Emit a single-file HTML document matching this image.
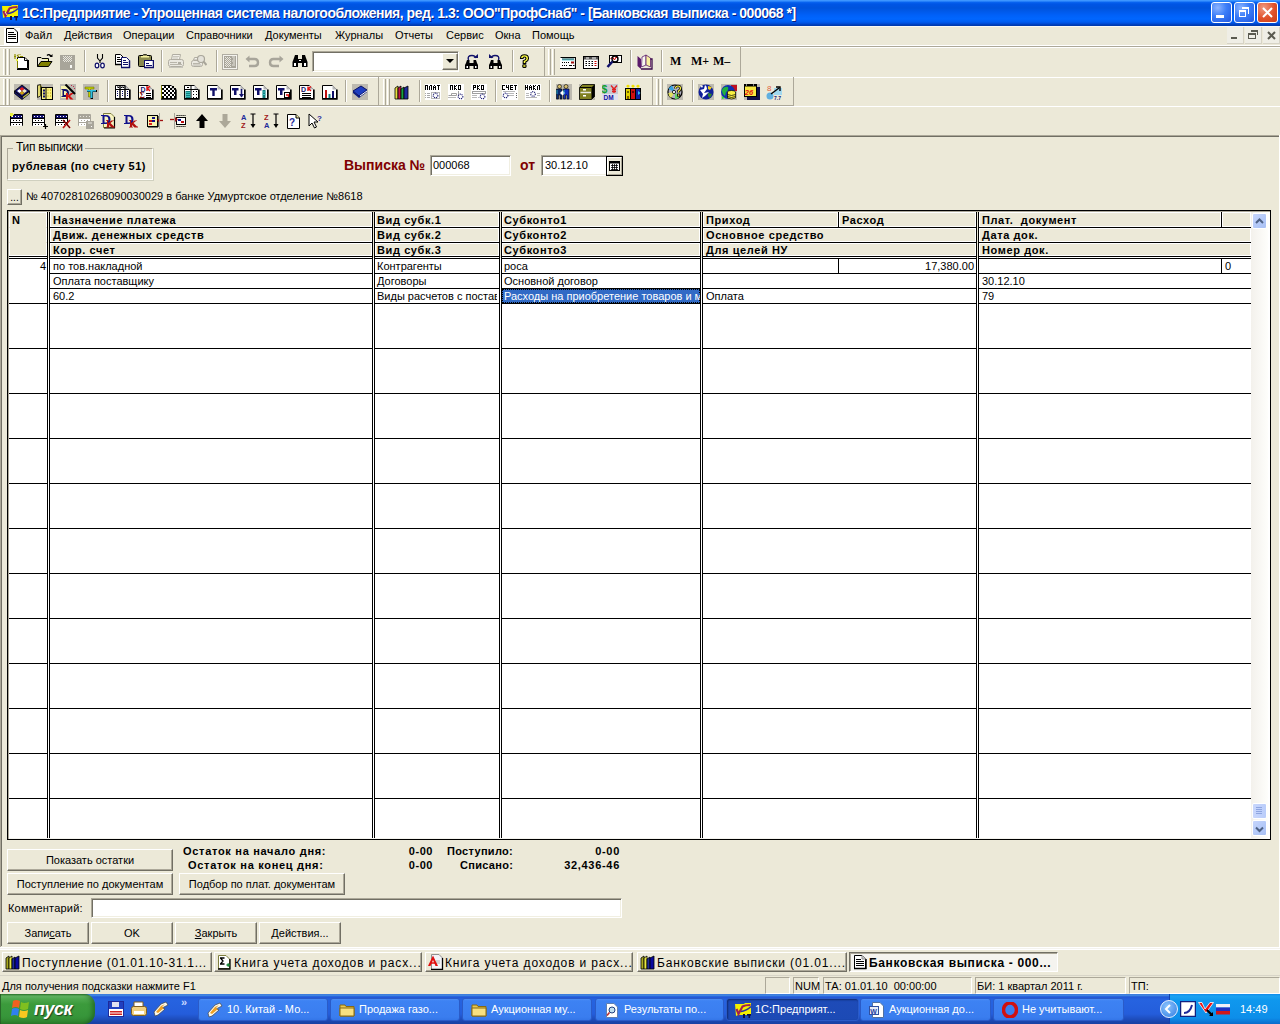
<!DOCTYPE html><html><head><meta charset="utf-8"><style>
*{box-sizing:border-box}
html,body{margin:0;padding:0;width:1280px;height:1024px;overflow:hidden;background:#ECE9D8;font-family:"Liberation Sans",sans-serif;font-size:11px;color:#000}
div{position:absolute}
.t{white-space:nowrap;line-height:13px}
.b{font-weight:bold;letter-spacing:0.55px}
.btn{background:#ECE9D8;border-top:1px solid #fff;border-left:1px solid #fff;border-right:1px solid #716F64;border-bottom:1px solid #716F64;box-shadow:inset -1px -1px 0 #ACA899;text-align:center;line-height:19px}
.sunk{background:#fff;border-top:1px solid #ACA899;border-left:1px solid #ACA899;border-right:1px solid #fff;border-bottom:1px solid #fff;box-shadow:inset 1px 1px 0 #716F64, inset -1px -1px 0 #F1EFE2}
svg{position:absolute}
</style></head><body>
<div style="left:0px;top:0px;width:1280px;height:26px;background:linear-gradient(#3D95FF 0px,#3D95FF 1px,#0A66F2 2px,#0055E5 4px,#0053DC 8px,#0060F8 15px,#0066FF 19px,#005CF0 22px,#0048D0 24px,#003BB0 25px)"></div>
<svg style="left:2px;top:4px" width="18" height="18" viewBox="0 0 18 18">
<path d="M0 2 H9 L10 1 H16 V12 L12 13 H3 L1 14 Z" fill="#F4F000"/>
<path d="M1.5 7 L3.5 12 L7.5 4.5 Q10 3 15.5 3" stroke="#A02050" stroke-width="2.2" fill="none"/>
<path d="M6 9.5 Q11 9 16 4.5" stroke="#30309A" stroke-width="1.6" fill="none"/>
<path d="M3 8 L5 11 M8 6 H11" stroke="#fff" stroke-width="0.8"/>
<rect x="8" y="12" width="2" height="4" fill="#101040"/><rect x="12" y="12" width="4" height="1.6" fill="#101040"/><rect x="13.5" y="12" width="1.6" height="4.5" fill="#101040"/>
</svg>
<div class="t" style="left:22px;top:5px;font-size:14px;font-weight:bold;color:#fff;text-shadow:1px 1px 0 #0A1E80;line-height:17px;letter-spacing:-0.48px">1C:Предприятие - Упрощенная система налогообложения, ред. 1.3: ООО"ПрофСнаб" - [Банковская выписка - 000068 *]</div>
<div style="left:1211px;top:2px;width:21px;height:21px;border:1px solid #fff;border-radius:3px;background:radial-gradient(circle at 30% 25%,#8CB4FF,#3C7EF8 45%,#2158E0)"></div>
<div style="left:1234px;top:2px;width:21px;height:21px;border:1px solid #fff;border-radius:3px;background:radial-gradient(circle at 30% 25%,#8CB4FF,#3C7EF8 45%,#2158E0)"></div>
<div style="left:1257px;top:2px;width:21px;height:21px;border:1px solid #fff;border-radius:3px;background:radial-gradient(circle at 30% 25%,#F09A80,#E0512A 55%,#C8401A)"></div>
<div style="left:1216px;top:15px;width:8px;height:3px;background:#fff"></div>
<div style="left:1239px;top:10px;width:7px;height:7px;border:1px solid #fff;border-top-width:2px"></div>
<div style="left:1242px;top:7px;width:7px;height:7px;border-top:2px solid #fff;border-right:1px solid #fff"></div>
<svg style="left:1261px;top:6px" width="13" height="13"><path d="M2 2 L11 11 M11 2 L2 11" stroke="#fff" stroke-width="2"/></svg>
<div style="left:0px;top:26px;width:1280px;height:1px;background:#F8F8F4"></div>
<div style="left:4px;top:28px;width:16px;height:17px;background:#fff"></div>
<svg style="left:6px;top:28px" width="12" height="15" viewBox="0 0 12 15"><path d="M0.5 0.5 H8 L11.5 4 V14.5 H0.5 Z" fill="#fff" stroke="#000"/><path d="M2 4.5 H8 M2 6.5 H10 M2 8.5 H10 M2 10.5 H10" stroke="#000" stroke-width="1"/></svg>
<div class="t" style="left:25px;top:29px;">Файл</div>
<div class="t" style="left:64px;top:29px;">Действия</div>
<div class="t" style="left:123px;top:29px;">Операции</div>
<div class="t" style="left:186px;top:29px;">Справочники</div>
<div class="t" style="left:265px;top:29px;">Документы</div>
<div class="t" style="left:335px;top:29px;">Журналы</div>
<div class="t" style="left:395px;top:29px;">Отчеты</div>
<div class="t" style="left:446px;top:29px;">Сервис</div>
<div class="t" style="left:495px;top:29px;">Окна</div>
<div class="t" style="left:532px;top:29px;">Помощь</div>
<div style="left:1227px;top:27px;width:17px;height:17px;background:#EFEEE6;border-right:1px solid #D6D3C6;border-bottom:1px solid #D6D3C6"></div>
<div style="left:1245px;top:27px;width:17px;height:17px;background:#EFEEE6;border-right:1px solid #D6D3C6;border-bottom:1px solid #D6D3C6"></div>
<div style="left:1263px;top:27px;width:17px;height:17px;background:#EFEEE6;border-right:1px solid #D6D3C6;border-bottom:1px solid #D6D3C6"></div>
<div style="left:1231px;top:37px;width:6px;height:2px;background:#5A5A50"></div>
<div style="left:1248px;top:33px;width:8px;height:6px;border:1px solid #5A5A50;border-top-width:2px"></div>
<div style="left:1251px;top:30px;width:7px;height:5px;border-top:2px solid #5A5A50;border-right:1px solid #5A5A50"></div>
<svg style="left:1266px;top:30px" width="11" height="11"><path d="M2 2 L9 9 M9 2 L2 9" stroke="#5A5A50" stroke-width="2"/></svg>
<div style="left:0px;top:45px;width:1280px;height:1px;background:#fff"></div>
<div style="left:0px;top:46px;width:1280px;height:1px;background:#ACA899"></div>
<div style="left:0px;top:47px;width:1280px;height:1px;background:#fff"></div>
<div style="left:3px;top:49px;width:1px;height:26px;background:#fff"></div>
<div style="left:5px;top:49px;width:1px;height:26px;background:#ACA899"></div>
<div style="left:7px;top:49px;width:1px;height:26px;background:#fff"></div>
<div style="left:9px;top:49px;width:1px;height:26px;background:#ACA899"></div>
<svg style="left:14px;top:54px" width="16" height="16" viewBox="0 0 16 16"><path d="M3.5 3.5 H11 L13.5 6 V14.5 H3.5 Z" fill="#fff" stroke="#000"/><path d="M3 15.5 H15 M14.5 6 V15" stroke="#000"/><path d="M3.5 6 V14" stroke="#808000"/><path d="M10.5 3.5 V6.5 H13.5" fill="none" stroke="#000"/><path d="M0 2.5 H2 M1 0 V5 M3 1 L5 3 M4 0 H7 M6 2.5 H9" stroke="#909000" stroke-width="1.2"/><rect x="2" y="5" width="2" height="2" fill="#E8F040"/></svg>
<svg style="left:37px;top:54px" width="16" height="16" viewBox="0 0 16 16"><path d="M0.5 3.5 H4 L5 4.5 H11.5 V7" fill="#F4F4A0" stroke="#000"/><path d="M0.5 3.5 V12.5" stroke="#000"/><path d="M0.5 12.5 L4 7.5 H15 L11.5 12.5 Z" fill="#808000" stroke="#000"/><path d="M10 1.5 Q12 -0.5 14.5 2.5" stroke="#000" stroke-width="1.3" fill="none"/><path d="M12.5 3 H15.5 V0 Z" fill="#000"/></svg>
<svg style="left:60px;top:54px" width="16" height="16" viewBox="0 0 16 16"><rect x="0" y="1" width="15" height="15" fill="#A8A59A"/><g fill="#E8E6DE"><rect x="3" y="2" width="1" height="1"/><rect x="3" y="4" width="1" height="1"/><rect x="3" y="6" width="1" height="1"/><rect x="4" y="3" width="1" height="1"/><rect x="4" y="5" width="1" height="1"/><rect x="4" y="7" width="1" height="1"/><rect x="5" y="2" width="1" height="1"/><rect x="5" y="4" width="1" height="1"/><rect x="5" y="6" width="1" height="1"/><rect x="6" y="3" width="1" height="1"/><rect x="6" y="5" width="1" height="1"/><rect x="6" y="7" width="1" height="1"/><rect x="7" y="2" width="1" height="1"/><rect x="7" y="4" width="1" height="1"/><rect x="7" y="6" width="1" height="1"/><rect x="8" y="3" width="1" height="1"/><rect x="8" y="5" width="1" height="1"/><rect x="8" y="7" width="1" height="1"/><rect x="9" y="2" width="1" height="1"/><rect x="9" y="4" width="1" height="1"/><rect x="9" y="6" width="1" height="1"/><rect x="10" y="3" width="1" height="1"/><rect x="10" y="5" width="1" height="1"/><rect x="10" y="7" width="1" height="1"/><rect x="11" y="2" width="1" height="1"/><rect x="11" y="4" width="1" height="1"/><rect x="11" y="6" width="1" height="1"/></g><rect x="10" y="11" width="2" height="3" fill="#F8F8F4"/></svg>
<svg style="left:92px;top:54px" width="16" height="16" viewBox="0 0 16 16"><path d="M5.5 0 V4 L8 7 M10.5 0 V4 L8 7 V9" stroke="#000" stroke-width="1.1" fill="none"/><ellipse cx="5" cy="11.5" rx="1.8" ry="2.4" fill="#fff" stroke="#10106A" stroke-width="1.2"/><ellipse cx="10.5" cy="11.5" rx="1.8" ry="2.4" fill="#fff" stroke="#10106A" stroke-width="1.2"/></svg>
<svg style="left:115px;top:54px" width="16" height="16" viewBox="0 0 16 16"><path d="M0.5 0.5 H5.5 L8.5 3.5 V10.5 H0.5 Z" fill="#fff" stroke="#000"/><path d="M0 10.5 H9" stroke="#000" stroke-width="1.5"/><path d="M2 3.5 H5 M2 5.5 H7 M2 7.5 H7" stroke="#000"/><path d="M6.5 3.5 H11.5 L14.5 6.5 V13.5 H6.5 Z" fill="#fff" stroke="#10106A"/><path d="M6 13.5 H15 M14.5 6.5 V14" stroke="#10106A" stroke-width="1.5"/><path d="M8 6.5 H11 M8 8.5 H13 M8 10.5 H13" stroke="#10106A"/></svg>
<svg style="left:138px;top:54px" width="16" height="16" viewBox="0 0 16 16"><rect x="0.5" y="1.5" width="13" height="11" rx="1" fill="#8A8A50" stroke="#000"/><path d="M4 2 H10 L8.5 0.5 H5.5 Z" fill="#F8F4A0" stroke="#000" stroke-width="0.8"/><rect x="3" y="2" width="8" height="1.5" fill="#F8F4A0"/><rect x="6.5" y="6.5" width="9" height="7" fill="#fff" stroke="#10106A"/><path d="M6 13.5 H16 M15.5 6 V14" stroke="#10106A" stroke-width="1.5"/><path d="M8 9.5 H11 M8 11.5 H14" stroke="#10106A"/></svg>
<svg style="left:168px;top:54px" width="16" height="16" viewBox="0 0 16 16"><path d="M4.5 0.5 H12.5 L11.5 5.5 H3.5 Z" fill="#F2F0EA" stroke="#B0ADA2"/><path d="M5 2.5 H11 M5 4 H10" stroke="#C8C6BC"/><rect x="0.5" y="5.5" width="15" height="7" rx="2" fill="#EAE8E0" stroke="#B0ADA2"/><path d="M2 8.5 H9 M2 10.5 H14" stroke="#B8B5AA"/><rect x="10" y="8" width="3" height="2" fill="#B0ADA2"/><path d="M1 13.5 H15" stroke="#C8C6BC"/></svg>
<svg style="left:191px;top:54px" width="16" height="16" viewBox="0 0 16 16"><path d="M3.5 3.5 H9 L8 6 H2.5 Z" fill="#F2F0EA" stroke="#B0ADA2"/><rect x="0.5" y="6.5" width="11" height="6" rx="2" fill="#EAE8E0" stroke="#B0ADA2"/><path d="M2 9.5 H9 M2 11 H10" stroke="#B8B5AA"/><circle cx="10" cy="5" r="3.5" fill="#E4E2DA" stroke="#A8A59A" stroke-width="1.2"/><path d="M12.5 7.5 L15.5 11" stroke="#A8A59A" stroke-width="2"/></svg>
<svg style="left:222px;top:54px" width="16" height="16" viewBox="0 0 16 16"><rect x="0.5" y="0.5" width="15" height="15" fill="#F4F3EE" stroke="#B0ADA2"/><rect x="2" y="2" width="12" height="12" fill="#A8A59A"/><g fill="#E8E6DE"><rect x="3" y="3" width="1" height="1"/><rect x="3" y="5" width="1" height="1"/><rect x="3" y="7" width="1" height="1"/><rect x="3" y="9" width="1" height="1"/><rect x="3" y="11" width="1" height="1"/><rect x="4" y="4" width="1" height="1"/><rect x="4" y="6" width="1" height="1"/><rect x="4" y="8" width="1" height="1"/><rect x="4" y="10" width="1" height="1"/><rect x="4" y="12" width="1" height="1"/><rect x="5" y="3" width="1" height="1"/><rect x="5" y="5" width="1" height="1"/><rect x="5" y="7" width="1" height="1"/><rect x="5" y="9" width="1" height="1"/><rect x="5" y="11" width="1" height="1"/><rect x="6" y="4" width="1" height="1"/><rect x="6" y="6" width="1" height="1"/><rect x="6" y="8" width="1" height="1"/><rect x="6" y="10" width="1" height="1"/><rect x="6" y="12" width="1" height="1"/><rect x="7" y="3" width="1" height="1"/><rect x="7" y="5" width="1" height="1"/><rect x="7" y="7" width="1" height="1"/><rect x="7" y="9" width="1" height="1"/><rect x="7" y="11" width="1" height="1"/><rect x="8" y="4" width="1" height="1"/><rect x="8" y="6" width="1" height="1"/><rect x="8" y="8" width="1" height="1"/><rect x="8" y="10" width="1" height="1"/><rect x="8" y="12" width="1" height="1"/></g><path d="M10 3 H13 M11 5 H13 M10 7 H13 M11 9 H13 M10 11 H13" stroke="#E8E6DE"/></svg>
<svg style="left:245px;top:54px" width="16" height="16" viewBox="0 0 16 16"><path d="M3 5 H9.5 Q13 5 13 8.5 Q13 12 9.5 12 H4" stroke="#A8A59A" stroke-width="2.4" fill="none"/><path d="M0.5 5 L4.5 1.5 V8.5 Z" fill="#A8A59A"/></svg>
<svg style="left:268px;top:54px" width="16" height="16" viewBox="0 0 16 16"><path d="M12 5 H5.5 Q2 5 2 8.5 Q2 12 5.5 12 H11" stroke="#A8A59A" stroke-width="2.4" fill="none"/><path d="M15.5 5 L11.5 1.5 V8.5 Z" fill="#A8A59A"/></svg>
<svg style="left:292px;top:54px" width="16" height="16" viewBox="0 0 16 16"><path d="M2 4 L3 1 H6 V5 H10 V1 H13 L14 4 L15.5 8 V13 H10 V9 H6 V13 H0.5 V8 Z" fill="#000"/><rect x="2" y="9" width="2" height="3" fill="#fff"/><rect x="12" y="9" width="2" height="3" fill="#fff"/><rect x="7" y="6" width="2" height="1" fill="#fff"/></svg>
<svg style="left:464px;top:54px" width="16" height="16" viewBox="0 0 16 16"><path d="M2 9 L3 6 H5.5 V9 H9.5 V6 H12 L13 9 L14 11 V15 H9.5 V12 H5.5 V15 H1 V11 Z" fill="#000"/><rect x="2.5" y="12" width="1.5" height="2" fill="#fff"/><rect x="11" y="12" width="1.5" height="2" fill="#fff"/><path d="M4.5 6 Q3 1.5 8 1.5 Q11 1.5 12 4" stroke="#10106A" stroke-width="1.4" fill="none"/><path d="M9.5 4 H14 V0 Z" fill="#10106A"/></svg>
<svg style="left:488px;top:54px" width="16" height="16" viewBox="0 0 16 16"><path d="M2 9 L3 6 H5.5 V9 H9.5 V6 H12 L13 9 L14 11 V15 H9.5 V12 H5.5 V15 H1 V11 Z" fill="#000"/><rect x="2.5" y="12" width="1.5" height="2" fill="#fff"/><rect x="11" y="12" width="1.5" height="2" fill="#fff"/><path d="M10.5 6 Q12 1.5 7 1.5 Q4 1.5 3 4" stroke="#10106A" stroke-width="1.4" fill="none"/><path d="M5.5 4 H1 V0 Z" fill="#10106A"/></svg>
<svg style="left:519px;top:54px" width="16" height="16" viewBox="0 0 16 16"><path d="M1.5 4.5 Q1.5 0.8 5.5 0.8 Q9.5 0.8 9.5 4.5 Q9.5 6.8 6.8 8 V9.5 H4.2 V6.8 Q7 5.8 7 4.5 Q7 3 5.5 3 Q4 3 4 4.5 Z" fill="#FFFF40" stroke="#000" stroke-width="1.1"/><rect x="3.8" y="10.8" width="3.2" height="2.6" rx="0.6" fill="#FFFF40" stroke="#000" stroke-width="1.1"/></svg>
<div style="left:84px;top:50px;width:1px;height:22px;background:#ACA899"></div>
<div style="left:85px;top:50px;width:1px;height:22px;background:#fff"></div>
<div style="left:161px;top:50px;width:1px;height:22px;background:#ACA899"></div>
<div style="left:162px;top:50px;width:1px;height:22px;background:#fff"></div>
<div style="left:216px;top:50px;width:1px;height:22px;background:#ACA899"></div>
<div style="left:217px;top:50px;width:1px;height:22px;background:#fff"></div>
<div style="left:512px;top:50px;width:1px;height:22px;background:#ACA899"></div>
<div style="left:513px;top:50px;width:1px;height:22px;background:#fff"></div>
<div class="sunk" style="left:312px;top:51px;width:147px;height:21px"></div>
<div class="btn" style="left:442px;top:53px;width:16px;height:17px;line-height:15px"></div>
<svg style="left:446px;top:59px" width="8" height="5" viewBox="0 0 8 5"><path d="M0 0 H8 L4 4 Z" fill="#000"/></svg>
<div style="left:544px;top:47px;width:1px;height:29px;background:#ACA899"></div>
<div style="left:548px;top:49px;width:1px;height:26px;background:#fff"></div>
<div style="left:550px;top:49px;width:1px;height:26px;background:#ACA899"></div>
<div style="left:552px;top:49px;width:1px;height:26px;background:#fff"></div>
<div style="left:554px;top:49px;width:1px;height:26px;background:#ACA899"></div>
<svg style="left:560px;top:54px" width="16" height="16" viewBox="0 0 16 16"><rect x="0" y="3" width="15" height="11" fill="#fff"/><path d="M0 14.5 H16 M15.5 3 V15" stroke="#000" stroke-width="1.2"/><path d="M0.5 3.5 H15" stroke="#000"/><rect x="2" y="4.5" width="12" height="2" fill="#70D8E0"/><path d="M2 5 H14" stroke="#000" stroke-width="0.6"/><g fill="#000"><rect x="2" y="8" width="1" height="1"/><rect x="4" y="8" width="1" height="1"/><rect x="6" y="8" width="1" height="1"/><rect x="8" y="8" width="1" height="1"/><rect x="2" y="11" width="1" height="1"/><rect x="4" y="11" width="1" height="1"/><rect x="6" y="11" width="1" height="1"/><rect x="9" y="11" width="3" height="1"/></g><rect x="11" y="7.5" width="3" height="2" fill="#A01010"/><rect x="13" y="11" width="1.5" height="1" fill="#000"/></svg>
<svg style="left:583px;top:54px" width="16" height="16" viewBox="0 0 16 16"><rect x="0.5" y="2.5" width="15" height="12" fill="#fff" stroke="#000"/><path d="M15.5 3 V15 M1 14.5 H16" stroke="#000" stroke-width="1.2"/><rect x="1" y="3" width="14" height="2.5" fill="#555"/><path d="M3 4 H6 M9 4 H13" stroke="#fff"/><path d="M2.5 7.5 H4 M5.5 7.5 H7 M8.5 7.5 H10 M2.5 9.5 H4 M5.5 9.5 H7 M8.5 9.5 H10 M2.5 11.5 H4 M5.5 11.5 H7 M8.5 11.5 H10" stroke="#000"/><path d="M11.5 7.5 H13.5 M11.5 9.5 H13.5 M11.5 11.5 H13.5" stroke="#C00"/></svg>
<svg style="left:606px;top:54px" width="16" height="16" viewBox="0 0 16 16"><rect x="3.5" y="1.5" width="12" height="7" fill="#fff" stroke="#000"/><path d="M4.5 5 L6.5 3 L8.5 6 L10 3 L12 5" stroke="#C00" fill="none"/><circle cx="9" cy="5" r="3" fill="none" stroke="#000" stroke-width="1.4"/><path d="M6.5 7.5 L1.5 13" stroke="#10106A" stroke-width="2.6"/></svg>
<svg style="left:637px;top:54px" width="16" height="16" viewBox="0 0 16 16"><path d="M0.5 2 L4 5 V15 L0.5 12 Z" fill="#5A1A6A"/><path d="M4 5 L5 3 V13 L4 15 Z" fill="#fff"/><path d="M4.5 13 L9 11 V1 L5 3 Z" fill="#F8F8F0" stroke="#5A1A6A" stroke-width="0.8"/><path d="M9 11 L13.5 13 V4 L9 1 Z" fill="#F8F0A0" stroke="#5A1A6A" stroke-width="0.8"/><path d="M4 15 H15 V5 H13.5" stroke="#3A0A4A" stroke-width="1.3" fill="none"/></svg>
<div style="left:630px;top:50px;width:1px;height:22px;background:#ACA899"></div>
<div style="left:631px;top:50px;width:1px;height:22px;background:#fff"></div>
<div style="left:661px;top:50px;width:1px;height:22px;background:#ACA899"></div>
<div style="left:662px;top:50px;width:1px;height:22px;background:#fff"></div>
<div class="t" style="left:670px;top:54px;font-family:'Liberation Serif';font-weight:bold;font-size:12px;line-height:14px">M</div>
<div class="t" style="left:691px;top:54px;font-family:'Liberation Serif';font-weight:bold;font-size:12px;line-height:14px">M+</div>
<div class="t" style="left:713px;top:54px;font-family:'Liberation Serif';font-weight:bold;font-size:12px;line-height:14px">M&#8211;</div>
<div style="left:740px;top:47px;width:1px;height:29px;background:#ACA899"></div>
<div style="left:0px;top:76px;width:741px;height:1px;background:#ACA899"></div>
<div style="left:0px;top:77px;width:1280px;height:1px;background:#fff"></div>
<div style="left:3px;top:79px;width:1px;height:26px;background:#fff"></div>
<div style="left:5px;top:79px;width:1px;height:26px;background:#ACA899"></div>
<div style="left:7px;top:79px;width:1px;height:26px;background:#fff"></div>
<div style="left:9px;top:79px;width:1px;height:26px;background:#ACA899"></div>
<svg style="left:14px;top:84px" width="16" height="16" viewBox="0 0 16 16"><rect x="0" y="0" width="16" height="16" fill="#BDBAB0"/><path d="M0.5 7 L8 1 L15.5 7 L8 13 Z" fill="#10106A" stroke="#000" stroke-width="0.8"/><path d="M3 7 L5.5 5 L8 7 L5.5 9 Z" fill="#fff"/><path d="M5.5 5 L8 3 L10.5 5 L8 7 Z" fill="#E02020"/><path d="M8 7 L10.5 5 L13 7 L10.5 9 Z" fill="#F0E8C0"/><path d="M5.5 9 L8 7 L10.5 9 L8 11 Z" fill="#D0A010"/><path d="M0.5 7 V9.5 L8 15.5 L15.5 9.5 V7 L8 13 Z" fill="#10106A" stroke="#000" stroke-width="0.8"/><path d="M9 13.5 L15 9" stroke="#C0C040" stroke-width="1.2"/></svg>
<svg style="left:37px;top:84px" width="16" height="16" viewBox="0 0 16 16"><rect x="0" y="0" width="16" height="16" fill="#BDBAB0"/><path d="M0.5 1.5 L3.5 0.5 V12 L0.5 13.5 Z" fill="#E0D870" stroke="#000" stroke-width="0.8"/><path d="M3.5 0.5 L5 2.5 V14 L3.5 12 Z" fill="#808020"/><rect x="4.5" y="3.5" width="11" height="12" fill="#F8F080" stroke="#000"/><path d="M9 3.5 V15.5" stroke="#000"/><rect x="6" y="5.5" width="2" height="2" fill="#10106A"/><rect x="6" y="8.5" width="2" height="2" fill="#10106A"/><rect x="6" y="11.5" width="2" height="2" fill="#10106A"/><g fill="#C0A000"><rect x="10.5" y="5.5" width="1" height="1"/><rect x="13" y="5.5" width="1" height="1"/><rect x="10.5" y="8.5" width="1" height="1"/><rect x="13" y="8.5" width="1" height="1"/><rect x="10.5" y="11.5" width="1" height="1"/><rect x="13" y="11.5" width="1" height="1"/></g></svg>
<svg style="left:60px;top:84px" width="16" height="16" viewBox="0 0 16 16"><rect x="0" y="0" width="16" height="16" fill="#BDBAB0"/><rect x="1" y="2" width="8" height="12" fill="#F8F4B0"/><path d="M1.5 5 H5 Q9 5 9 9 Q9 13 5 13 H1.5 V12 H2.5 V6 H1.5 Z" fill="#10106A"/><path d="M4 7 V11 H5 Q7 11 7 9 Q7 7 5 7 Z" fill="#F8F4B0"/><path d="M6 9 H8 V11.5 L11 9 H14 L10 12 L13.5 15.5 H10.5 L8 13 V15.5 H6 Z" fill="#D01010"/><path d="M5.5 0.5 L15 10" stroke="#000" stroke-width="2"/><g fill="#C03050"><rect x="11" y="1" width="1" height="1"/><rect x="14" y="4" width="1" height="1"/><rect x="13" y="2" width="1" height="1"/></g></svg>
<svg style="left:83px;top:84px" width="16" height="16" viewBox="0 0 16 16"><rect x="0" y="0" width="16" height="16" fill="#BDBAB0"/><path d="M2 3 H11 V5 H7.5 V13 H5.5 V5 H2 Z" fill="#C0D000" stroke="#606000" stroke-width="0.5"/><path d="M4 6 H14 V8 H10 V15 H7.5 V8 H4 Z" fill="#000"/><path d="M4 6 H13 V7.5 H9.5 V14 H7.5 V7.5 H4 Z" fill="#30C0E0"/></svg>
<svg style="left:115px;top:84px" width="16" height="16" viewBox="0 0 16 16"><path d="M0.5 1.5 H10.5 L14.5 5.5 V14.5 H0.5 Z" fill="#fff" stroke="#000"/><path d="M0 15 H15.5 M15 5.5 V15.5" stroke="#000" stroke-width="1.4"/><path d="M10.5 1 L15 5.5 H10.5 Z" fill="#B8B8B8"/><path d="M5 2 V14 M10 2 V14" stroke="#000" stroke-width="1.4"/><path d="M1 5.5 H14" stroke="#000"/><path d="M2 3 H3.5 V4 M6.5 4 V3 H8.5 V4" stroke="#000" fill="none"/><path d="M2.5 7 V13 M7.5 7 V13 M12.5 7 V13" stroke="#10106A" stroke-dasharray="1 1"/></svg>
<svg style="left:138px;top:84px" width="16" height="16" viewBox="0 0 16 16"><path d="M0.5 1.5 H10.5 L14.5 5.5 V14.5 H0.5 Z" fill="#fff" stroke="#000"/><path d="M0 15 H15.5 M15 5.5 V15.5" stroke="#000" stroke-width="1.4"/><path d="M10.5 1 L15 5.5 H10.5 Z" fill="#B8B8B8"/><text x="2.5" y="7.5" font-size="7" font-weight="bold" fill="#10106A" font-family="Liberation Sans">D</text><path d="M9 2 V7 M12 2 L9.5 4.5 L12 7" stroke="#E01010" stroke-width="1.4" fill="none"/><text x="1.5" y="14" font-size="8" fill="#801010" font-family="Liberation Serif" font-weight="bold">Σ</text><path d="M8 9.5 H13 M8 11.5 H13 M8 13.5 H13" stroke="#000"/></svg>
<svg style="left:161px;top:84px" width="16" height="16" viewBox="0 0 16 16"><path d="M0.5 1.5 H10.5 L14.5 5.5 V14.5 H0.5 Z" fill="#fff" stroke="#000"/><path d="M0 15 H15.5 M15 5.5 V15.5" stroke="#000" stroke-width="1.4"/><path d="M10.5 1 L15 5.5 H10.5 Z" fill="#B8B8B8"/><g fill="#000"><rect x="1" y="4" width="2" height="2"/><rect x="1" y="8" width="2" height="2"/><rect x="1" y="12" width="2" height="2"/><rect x="3" y="2" width="2" height="2"/><rect x="3" y="6" width="2" height="2"/><rect x="3" y="10" width="2" height="2"/><rect x="5" y="4" width="2" height="2"/><rect x="5" y="8" width="2" height="2"/><rect x="5" y="12" width="2" height="2"/><rect x="7" y="2" width="2" height="2"/><rect x="7" y="6" width="2" height="2"/><rect x="7" y="10" width="2" height="2"/><rect x="9" y="4" width="2" height="2"/><rect x="9" y="8" width="2" height="2"/><rect x="9" y="12" width="2" height="2"/><rect x="11" y="2" width="2" height="2"/><rect x="11" y="6" width="2" height="2"/><rect x="11" y="10" width="2" height="2"/><rect x="13" y="4" width="2" height="2"/><rect x="13" y="8" width="2" height="2"/><rect x="13" y="12" width="2" height="2"/></g><path d="M0.5 1.5 V14.5" stroke="#808000"/></svg>
<svg style="left:184px;top:84px" width="16" height="16" viewBox="0 0 16 16"><path d="M0.5 1.5 H10.5 L14.5 5.5 V14.5 H0.5 Z" fill="#fff" stroke="#000"/><path d="M0 15 H15.5 M15 5.5 V15.5" stroke="#000" stroke-width="1.4"/><path d="M10.5 1 L15 5.5 H10.5 Z" fill="#B8B8B8"/><path d="M1 5.5 H14 M7 2 V14" stroke="#000"/><rect x="3" y="3" width="2" height="1" fill="#000"/><rect x="1.5" y="7" width="5" height="7" fill="#108080"/><path d="M2 8.5 H6 M2 10.5 H6 M2 12.5 H6" stroke="#40C0C0"/><g fill="#000"><rect x="9" y="7" width="1" height="1"/><rect x="12" y="7" width="1" height="1"/><rect x="9" y="10" width="1" height="1"/><rect x="12" y="10" width="1" height="1"/><rect x="9" y="13" width="1" height="1"/><rect x="12" y="13" width="1" height="1"/></g></svg>
<svg style="left:207px;top:84px" width="16" height="16" viewBox="0 0 16 16"><path d="M0.5 1.5 H10.5 L14.5 5.5 V14.5 H0.5 Z" fill="#fff" stroke="#000"/><path d="M0 15 H15.5 M15 5.5 V15.5" stroke="#000" stroke-width="1.4"/><path d="M10.5 1 L15 5.5 H10.5 Z" fill="#B8B8B8"/><path d="M3 4 H10 V6.5 H7.7 V12 H5.3 V6.5 H3 Z" fill="#10106A"/></svg>
<svg style="left:230px;top:84px" width="16" height="16" viewBox="0 0 16 16"><path d="M0.5 1.5 H10.5 L14.5 5.5 V14.5 H0.5 Z" fill="#fff" stroke="#000"/><path d="M0 15 H15.5 M15 5.5 V15.5" stroke="#000" stroke-width="1.4"/><path d="M10.5 1 L15 5.5 H10.5 Z" fill="#B8B8B8"/><path d="M2 4 H8.5 V6.5 H6.5 V11 H4 V6.5 H2 Z" fill="#10106A"/><path d="M11.5 5 V12.5" stroke="#10106A" stroke-width="1.6"/><path d="M9 10 H14 L11.5 13.5 Z" fill="#10106A"/></svg>
<svg style="left:253px;top:84px" width="16" height="16" viewBox="0 0 16 16"><path d="M0.5 1.5 H10.5 L14.5 5.5 V14.5 H0.5 Z" fill="#fff" stroke="#000"/><path d="M0 15 H15.5 M15 5.5 V15.5" stroke="#000" stroke-width="1.4"/><path d="M10.5 1 L15 5.5 H10.5 Z" fill="#B8B8B8"/><path d="M2 4 H8.5 V6.5 H6.5 V11 H4 V6.5 H2 Z" fill="#10106A"/><rect x="9.5" y="6" width="3" height="8" fill="#108080"/><path d="M9.5 8 H12.5 M9.5 10.5 H12.5" stroke="#40C0C0"/></svg>
<svg style="left:276px;top:84px" width="16" height="16" viewBox="0 0 16 16"><path d="M0.5 1.5 H10.5 L14.5 5.5 V14.5 H0.5 Z" fill="#fff" stroke="#000"/><path d="M0 15 H15.5 M15 5.5 V15.5" stroke="#000" stroke-width="1.4"/><path d="M10.5 1 L15 5.5 H10.5 Z" fill="#B8B8B8"/><path d="M2 4 H8.5 V6.5 H6.5 V11 H4 V6.5 H2 Z" fill="#10106A"/><rect x="8.5" y="8.5" width="5" height="5" fill="#fff" stroke="#000"/><path d="M10 11 H12.5 V13" stroke="#E01010" stroke-width="1.3" fill="none"/></svg>
<svg style="left:299px;top:84px" width="16" height="16" viewBox="0 0 16 16"><path d="M0.5 1.5 H10.5 L14.5 5.5 V14.5 H0.5 Z" fill="#fff" stroke="#000"/><path d="M0 15 H15.5 M15 5.5 V15.5" stroke="#000" stroke-width="1.4"/><path d="M10.5 1 L15 5.5 H10.5 Z" fill="#B8B8B8"/><text x="2" y="7.5" font-size="7" font-weight="bold" fill="#10106A" font-family="Liberation Sans">D</text><path d="M9 2.5 V7 M12 2.5 L9.5 4.5 L12 7" stroke="#E01010" stroke-width="1.4" fill="none"/><path d="M3 9.5 H12 M3 11.5 H12 M3 13.5 H12" stroke="#000" stroke-width="1.2"/></svg>
<svg style="left:322px;top:84px" width="16" height="16" viewBox="0 0 16 16"><path d="M0.5 1.5 H10.5 L14.5 5.5 V14.5 H0.5 Z" fill="#fff" stroke="#000"/><path d="M0 15 H15.5 M15 5.5 V15.5" stroke="#000" stroke-width="1.4"/><path d="M10.5 1 L15 5.5 H10.5 Z" fill="#B8B8B8"/><rect x="3" y="6" width="2" height="8" fill="#C01010"/><rect x="6.5" y="10" width="2" height="4" fill="#108080"/><rect x="10" y="7" width="2" height="7" fill="#10106A"/></svg>
<svg style="left:352px;top:84px" width="16" height="16" viewBox="0 0 16 16"><rect x="0" y="0" width="16" height="16" fill="#BDBAB0"/><path d="M1 7 L9 2 L15 6 L7 12 Z" fill="#1E3EC0" stroke="#0A1060"/><path d="M1 7 V9 L7 14 L15 8 V6 L7 12 Z" fill="#0A1A80"/><path d="M8 12 L15 7" stroke="#fff"/></svg>
<div style="left:107px;top:80px;width:1px;height:22px;background:#ACA899"></div>
<div style="left:108px;top:80px;width:1px;height:22px;background:#fff"></div>
<div style="left:345px;top:80px;width:1px;height:22px;background:#ACA899"></div>
<div style="left:346px;top:80px;width:1px;height:22px;background:#fff"></div>
<div style="left:378px;top:77px;width:1px;height:29px;background:#ACA899"></div>
<div style="left:383px;top:79px;width:1px;height:26px;background:#fff"></div>
<div style="left:385px;top:79px;width:1px;height:26px;background:#ACA899"></div>
<div style="left:387px;top:79px;width:1px;height:26px;background:#fff"></div>
<div style="left:389px;top:79px;width:1px;height:26px;background:#ACA899"></div>
<svg style="left:394px;top:84px" width="16" height="16" viewBox="0 0 16 16"><path d="M1 4 L4 2 V15 H1 Z" fill="#E8E040" stroke="#000" stroke-width="0.8"/><path d="M4 4 L7 2 V15 H4 Z" fill="#C01848" stroke="#000" stroke-width="0.8"/><path d="M7 5 L10 3 V15 H7 Z" fill="#18A040" stroke="#000" stroke-width="0.8"/><path d="M10 4 L14 2 V15 H10 Z" fill="#1E2A9A" stroke="#000" stroke-width="0.8"/></svg>
<svg style="left:425px;top:84px" width="16" height="16" viewBox="0 0 16 16"><rect x="0" y="0" width="16" height="16" fill="#fff"/><g fill="#000"><rect x="0" y="1" width="1" height="1"/><rect x="1" y="1" width="1" height="1"/><rect x="2" y="1" width="1" height="1"/><rect x="0" y="2" width="1" height="1"/><rect x="2" y="2" width="1" height="1"/><rect x="0" y="3" width="1" height="1"/><rect x="2" y="3" width="1" height="1"/><rect x="0" y="4" width="1" height="1"/><rect x="2" y="4" width="1" height="1"/><rect x="0" y="5" width="1" height="1"/><rect x="2" y="5" width="1" height="1"/><rect x="5" y="1" width="1" height="1"/><rect x="6" y="1" width="1" height="1"/><rect x="4" y="2" width="1" height="1"/><rect x="6" y="2" width="1" height="1"/><rect x="4" y="3" width="1" height="1"/><rect x="6" y="3" width="1" height="1"/><rect x="4" y="4" width="1" height="1"/><rect x="6" y="4" width="1" height="1"/><rect x="4" y="5" width="1" height="1"/><rect x="6" y="5" width="1" height="1"/><rect x="9" y="1" width="1" height="1"/><rect x="8" y="2" width="1" height="1"/><rect x="10" y="2" width="1" height="1"/><rect x="8" y="3" width="1" height="1"/><rect x="9" y="3" width="1" height="1"/><rect x="10" y="3" width="1" height="1"/><rect x="8" y="4" width="1" height="1"/><rect x="10" y="4" width="1" height="1"/><rect x="8" y="5" width="1" height="1"/><rect x="10" y="5" width="1" height="1"/><rect x="12" y="1" width="1" height="1"/><rect x="13" y="1" width="1" height="1"/><rect x="14" y="1" width="1" height="1"/><rect x="13" y="2" width="1" height="1"/><rect x="13" y="3" width="1" height="1"/><rect x="13" y="4" width="1" height="1"/><rect x="13" y="5" width="1" height="1"/></g><path d="M0 9.5 H1 M2 9.5 H5 M0 11.5 H1 M2 11.5 H5 M0 13.5 H1 M2 13.5 H5" stroke="#A8A8A8"/><rect x="6.5" y="8.5" width="8" height="6" fill="none" stroke="#B8B8B8"/><circle cx="10.5" cy="11.5" r="2.3" fill="#fff" stroke="#1A1A70" stroke-width="1.2" stroke-dasharray="1 0.8"/></svg>
<svg style="left:448px;top:84px" width="16" height="16" viewBox="0 0 16 16"><rect x="0" y="0" width="16" height="16" fill="#fff"/><g fill="#000"><rect x="2" y="1" width="1" height="1"/><rect x="3" y="1" width="1" height="1"/><rect x="4" y="1" width="1" height="1"/><rect x="2" y="2" width="1" height="1"/><rect x="4" y="2" width="1" height="1"/><rect x="2" y="3" width="1" height="1"/><rect x="4" y="3" width="1" height="1"/><rect x="2" y="4" width="1" height="1"/><rect x="4" y="4" width="1" height="1"/><rect x="2" y="5" width="1" height="1"/><rect x="4" y="5" width="1" height="1"/><rect x="6" y="1" width="1" height="1"/><rect x="8" y="1" width="1" height="1"/><rect x="6" y="2" width="1" height="1"/><rect x="7" y="2" width="1" height="1"/><rect x="6" y="3" width="1" height="1"/><rect x="6" y="4" width="1" height="1"/><rect x="7" y="4" width="1" height="1"/><rect x="6" y="5" width="1" height="1"/><rect x="8" y="5" width="1" height="1"/><rect x="10" y="1" width="1" height="1"/><rect x="11" y="1" width="1" height="1"/><rect x="12" y="1" width="1" height="1"/><rect x="10" y="2" width="1" height="1"/><rect x="12" y="2" width="1" height="1"/><rect x="10" y="3" width="1" height="1"/><rect x="12" y="3" width="1" height="1"/><rect x="10" y="4" width="1" height="1"/><rect x="12" y="4" width="1" height="1"/><rect x="10" y="5" width="1" height="1"/><rect x="11" y="5" width="1" height="1"/><rect x="12" y="5" width="1" height="1"/></g><path d="M0.5 11.5 H8.5 V9.5 H3.5 V11.5" fill="none" stroke="#A0A0A0"/><path d="M0 13.5 H8" stroke="#B8B8B8"/><path d="M10.5 7 V13" stroke="#A0A0A0"/><circle cx="12.5" cy="12.5" r="2.3" fill="#fff" stroke="#1A1A70" stroke-width="1.2" stroke-dasharray="1 0.8"/></svg>
<svg style="left:471px;top:84px" width="16" height="16" viewBox="0 0 16 16"><rect x="0" y="0" width="16" height="16" fill="#fff"/><g fill="#000"><rect x="2" y="1" width="1" height="1"/><rect x="3" y="1" width="1" height="1"/><rect x="4" y="1" width="1" height="1"/><rect x="2" y="2" width="1" height="1"/><rect x="4" y="2" width="1" height="1"/><rect x="2" y="3" width="1" height="1"/><rect x="3" y="3" width="1" height="1"/><rect x="4" y="3" width="1" height="1"/><rect x="2" y="4" width="1" height="1"/><rect x="2" y="5" width="1" height="1"/><rect x="6" y="1" width="1" height="1"/><rect x="8" y="1" width="1" height="1"/><rect x="6" y="2" width="1" height="1"/><rect x="7" y="2" width="1" height="1"/><rect x="6" y="3" width="1" height="1"/><rect x="6" y="4" width="1" height="1"/><rect x="7" y="4" width="1" height="1"/><rect x="6" y="5" width="1" height="1"/><rect x="8" y="5" width="1" height="1"/><rect x="10" y="1" width="1" height="1"/><rect x="11" y="1" width="1" height="1"/><rect x="12" y="1" width="1" height="1"/><rect x="10" y="2" width="1" height="1"/><rect x="12" y="2" width="1" height="1"/><rect x="10" y="3" width="1" height="1"/><rect x="12" y="3" width="1" height="1"/><rect x="10" y="4" width="1" height="1"/><rect x="12" y="4" width="1" height="1"/><rect x="10" y="5" width="1" height="1"/><rect x="11" y="5" width="1" height="1"/><rect x="12" y="5" width="1" height="1"/></g><rect x="1.5" y="7.5" width="13" height="2" fill="none" stroke="#A0A0A0"/><path d="M1 11.5 H6 M1 13.5 H6 M7 13.5 H8" stroke="#B8B8B8"/><circle cx="11.5" cy="12.5" r="2.3" fill="#fff" stroke="#1A1A70" stroke-width="1.2" stroke-dasharray="1 0.8"/></svg>
<svg style="left:502px;top:84px" width="16" height="16" viewBox="0 0 16 16"><rect x="0" y="0" width="16" height="16" fill="#fff"/><g fill="#000"><rect x="0" y="1" width="1" height="1"/><rect x="1" y="1" width="1" height="1"/><rect x="2" y="1" width="1" height="1"/><rect x="0" y="2" width="1" height="1"/><rect x="0" y="3" width="1" height="1"/><rect x="0" y="4" width="1" height="1"/><rect x="0" y="5" width="1" height="1"/><rect x="1" y="5" width="1" height="1"/><rect x="2" y="5" width="1" height="1"/><rect x="4" y="1" width="1" height="1"/><rect x="6" y="1" width="1" height="1"/><rect x="4" y="2" width="1" height="1"/><rect x="6" y="2" width="1" height="1"/><rect x="4" y="3" width="1" height="1"/><rect x="5" y="3" width="1" height="1"/><rect x="6" y="3" width="1" height="1"/><rect x="6" y="4" width="1" height="1"/><rect x="6" y="5" width="1" height="1"/><rect x="8" y="1" width="1" height="1"/><rect x="9" y="1" width="1" height="1"/><rect x="10" y="1" width="1" height="1"/><rect x="8" y="2" width="1" height="1"/><rect x="8" y="3" width="1" height="1"/><rect x="9" y="3" width="1" height="1"/><rect x="10" y="3" width="1" height="1"/><rect x="8" y="4" width="1" height="1"/><rect x="8" y="5" width="1" height="1"/><rect x="9" y="5" width="1" height="1"/><rect x="10" y="5" width="1" height="1"/><rect x="12" y="1" width="1" height="1"/><rect x="13" y="1" width="1" height="1"/><rect x="14" y="1" width="1" height="1"/><rect x="13" y="2" width="1" height="1"/><rect x="13" y="3" width="1" height="1"/><rect x="13" y="4" width="1" height="1"/><rect x="13" y="5" width="1" height="1"/></g><path d="M1 7.5 H13 M6 9.5 H12 M6 11.5 H12" stroke="#B8B8B8"/><path d="M14.5 9 V10 M14.5 11 V12 M14.5 13 V14" stroke="#606060"/><circle cx="3.5" cy="11.5" r="2.3" fill="#fff" stroke="#1A1A70" stroke-width="1.2" stroke-dasharray="1 0.8"/></svg>
<svg style="left:525px;top:84px" width="16" height="16" viewBox="0 0 16 16"><rect x="0" y="0" width="16" height="16" fill="#fff"/><g fill="#000"><rect x="0" y="1" width="1" height="1"/><rect x="2" y="1" width="1" height="1"/><rect x="0" y="2" width="1" height="1"/><rect x="2" y="2" width="1" height="1"/><rect x="0" y="3" width="1" height="1"/><rect x="1" y="3" width="1" height="1"/><rect x="2" y="3" width="1" height="1"/><rect x="0" y="4" width="1" height="1"/><rect x="2" y="4" width="1" height="1"/><rect x="0" y="5" width="1" height="1"/><rect x="2" y="5" width="1" height="1"/><rect x="5" y="1" width="1" height="1"/><rect x="4" y="2" width="1" height="1"/><rect x="6" y="2" width="1" height="1"/><rect x="4" y="3" width="1" height="1"/><rect x="5" y="3" width="1" height="1"/><rect x="6" y="3" width="1" height="1"/><rect x="4" y="4" width="1" height="1"/><rect x="6" y="4" width="1" height="1"/><rect x="4" y="5" width="1" height="1"/><rect x="6" y="5" width="1" height="1"/><rect x="8" y="1" width="1" height="1"/><rect x="10" y="1" width="1" height="1"/><rect x="8" y="2" width="1" height="1"/><rect x="9" y="2" width="1" height="1"/><rect x="8" y="3" width="1" height="1"/><rect x="8" y="4" width="1" height="1"/><rect x="9" y="4" width="1" height="1"/><rect x="8" y="5" width="1" height="1"/><rect x="10" y="5" width="1" height="1"/><rect x="13" y="1" width="1" height="1"/><rect x="14" y="1" width="1" height="1"/><rect x="12" y="2" width="1" height="1"/><rect x="14" y="2" width="1" height="1"/><rect x="12" y="3" width="1" height="1"/><rect x="14" y="3" width="1" height="1"/><rect x="12" y="4" width="1" height="1"/><rect x="14" y="4" width="1" height="1"/><rect x="12" y="5" width="1" height="1"/><rect x="14" y="5" width="1" height="1"/></g><path d="M1 9.5 H4 M1 11.5 H4 M1 13.5 H12 M12 9.5 H15 M12 11.5 H15" stroke="#B8B8B8"/><circle cx="8" cy="10" r="2.3" fill="#fff" stroke="#1A1A70" stroke-width="1.2" stroke-dasharray="1 0.8"/></svg>
<svg style="left:556px;top:84px" width="16" height="16" viewBox="0 0 16 16"><rect x="0" y="0" width="16" height="16" fill="#BDBAB0"/><circle cx="3.5" cy="2.5" r="2" fill="#D8C070" stroke="#000" stroke-width="0.6"/><circle cx="10" cy="2.5" r="2" fill="#D8C070" stroke="#000" stroke-width="0.6"/><path d="M0.5 5 H6 V15 H4 V11 H2.5 V15 H0.5 Z" fill="#0A2A70" stroke="#000" stroke-width="0.6"/><path d="M7.5 5 H13 V15 H11 V11 H9.5 V15 H7.5 Z" fill="#1030C0" stroke="#000" stroke-width="0.6"/><path d="M4 9 L6.5 6.5 L9 9 L6.5 11.5 Z" fill="#fff"/><path d="M1 6 V10 M8 6 V10" stroke="#20A0C0"/></svg>
<svg style="left:579px;top:84px" width="16" height="16" viewBox="0 0 16 16"><rect x="0" y="0" width="16" height="16" fill="#BDBAB0"/><path d="M0.5 3.5 L3.5 0.5 H15.5 V12.5 L12.5 15.5 H0.5 Z" fill="#808020" stroke="#000" stroke-width="0.8"/><path d="M12.5 3.5 V15.5 L15.5 12.5 V0.5 Z" fill="#000"/><path d="M1 3.5 H12.5" stroke="#000"/><rect x="4" y="5" width="3" height="1.5" fill="#fff"/><path d="M1.5 8.5 H12" stroke="#E8E8E0" stroke-width="1.5"/><rect x="4" y="11" width="3" height="1.5" fill="#fff"/></svg>
<svg style="left:602px;top:84px" width="16" height="16" viewBox="0 0 16 16"><rect x="0" y="0" width="16" height="16" fill="#C8C8D0"/><text x="-0.5" y="9" font-size="10.5" font-weight="bold" fill="#10A030" font-family="Liberation Sans">$</text><path d="M9 1.5 L12 5 L15 1.5 M12 5 V9 M10 5.5 H14 M10 7.5 H14" stroke="#E02020" stroke-width="1.3" fill="none"/><rect x="0" y="10" width="16" height="6" fill="#E0E0F0"/><text x="1.5" y="15.5" font-size="6.5" font-weight="bold" fill="#1010A0" font-family="Liberation Sans">DM</text></svg>
<svg style="left:625px;top:84px" width="16" height="16" viewBox="0 0 16 16"><rect x="0" y="4" width="16" height="12" fill="#000"/><path d="M1 2 L3 0.5 L5 2 L3 4 Z M6 2 L8 0.5 L10 2 L8 4 Z M11 2 L13 0.5 L15 2 L13 4 Z" fill="#F0E000"/><rect x="1" y="5" width="4" height="10" fill="#E0D000"/><rect x="6" y="5" width="4" height="10" fill="#D01010"/><rect x="11" y="5" width="4" height="10" fill="#1020A0"/><path d="M2 8 H4 M7 8 H9" stroke="#000"/><path d="M13 7 L15.5 9 L13 11 Z" fill="#30C0F0"/><rect x="2" y="12" width="2" height="3" fill="#806000"/></svg>
<div style="left:419px;top:80px;width:1px;height:22px;background:#ACA899"></div>
<div style="left:420px;top:80px;width:1px;height:22px;background:#fff"></div>
<div style="left:495px;top:80px;width:1px;height:22px;background:#ACA899"></div>
<div style="left:496px;top:80px;width:1px;height:22px;background:#fff"></div>
<div style="left:549px;top:80px;width:1px;height:22px;background:#ACA899"></div>
<div style="left:550px;top:80px;width:1px;height:22px;background:#fff"></div>
<div style="left:652px;top:77px;width:1px;height:29px;background:#ACA899"></div>
<div style="left:656px;top:79px;width:1px;height:26px;background:#fff"></div>
<div style="left:658px;top:79px;width:1px;height:26px;background:#ACA899"></div>
<div style="left:660px;top:79px;width:1px;height:26px;background:#fff"></div>
<div style="left:662px;top:79px;width:1px;height:26px;background:#ACA899"></div>
<svg style="left:667px;top:84px" width="16" height="16" viewBox="0 0 16 16"><rect x="0" y="0" width="16" height="16" fill="#BDBAB0"/><circle cx="8" cy="8" r="7" fill="#B0B0C0" stroke="#000" stroke-width="1.2"/><path d="M8 8 L1.5 5 A7 7 0 0 1 5 1.5 Z" fill="#30A0E0"/><path d="M8 8 L4 14 A7 7 0 0 1 1.2 9 Z" fill="#E0E060"/><path d="M8 8 L12 14 A7 7 0 0 1 8 15 Z" fill="#60D060"/><circle cx="7" cy="8" r="1.6" fill="#fff" stroke="#000" stroke-width="0.8"/><path d="M8.5 4.5 Q8.5 2 11 2 Q13.5 2 13.5 4.5 Q13.5 6 11.5 7 V8.5" stroke="#000" stroke-width="2.6" fill="none"/><path d="M8.5 4.5 Q8.5 2 11 2 Q13.5 2 13.5 4.5 Q13.5 6 11.5 7 V8.5" stroke="#F8F040" stroke-width="1.2" fill="none"/><rect x="10.5" y="10" width="2.2" height="2.2" fill="#F8F040" stroke="#000" stroke-width="0.8"/></svg>
<svg style="left:698px;top:84px" width="16" height="16" viewBox="0 0 16 16"><rect x="0" y="0" width="16" height="16" fill="#BDBAB0"/><circle cx="8" cy="8" r="7.5" fill="#10209A"/><path d="M2 6 L6 5 L7 1 Q9 2 9 5 L6 9 L11 8 L7 12 L4 14 L5 10 Z" fill="#fff"/><path d="M2 1 L5 2 L4 4 Z" fill="#fff"/><path d="M10 2 L14 3 L12 6 L10 5 Z" fill="#F0D020"/><path d="M10 9 L14 10 L12 14 L10 12 Z" fill="#308030"/></svg>
<svg style="left:721px;top:84px" width="16" height="16" viewBox="0 0 16 16"><rect x="0" y="0" width="16" height="16" fill="#BDBAB0"/><rect x="10" y="1" width="6" height="6" fill="#C01020"/><circle cx="7" cy="8" r="7" fill="#1030B0"/><path d="M1 6 Q3 2 7 3 Q8 6 5 8 L4 12 Q1 10 1 6 Z" fill="#20B040"/><path d="M1 12 L4 14 L1 15 Z" fill="#30E030"/><ellipse cx="10.5" cy="8" rx="4" ry="1.5" fill="#F8F040" stroke="#000" stroke-width="0.7"/><path d="M6.5 8 V14 Q10.5 16 14.5 14 V8" fill="#F8F040" stroke="#000" stroke-width="0.7"/><path d="M6.5 10.5 Q10.5 12.5 14.5 10.5 M6.5 12.5 Q10.5 14.5 14.5 12.5" stroke="#000" stroke-width="0.7" fill="none"/></svg>
<svg style="left:744px;top:84px" width="16" height="16" viewBox="0 0 16 16"><rect x="0" y="0" width="16" height="16" fill="#BDBAB0"/><rect x="3" y="3" width="13" height="13" fill="#10104A"/><rect x="0.5" y="0.5" width="12" height="12" fill="#F8E840" stroke="#000"/><rect x="0" y="0" width="13" height="2.5" fill="#000"/><rect x="2" y="0.5" width="1" height="1" fill="#fff"/><rect x="9" y="0.5" width="1" height="1" fill="#fff"/><text x="0.8" y="10.5" font-size="7.5" font-style="italic" font-weight="bold" fill="#E01010" font-family="Liberation Sans">26</text></svg>
<svg style="left:766px;top:84px" width="16" height="16" viewBox="0 0 16 16"><text x="1" y="7" font-size="8" fill="#E06040" font-family="Liberation Sans">8</text><circle cx="4" cy="12" r="3.5" fill="#60B0E0"/><rect x="8" y="4" width="8" height="7" fill="#A0D8F0"/><path d="M5 10 L13 4" stroke="#000" stroke-width="1.4"/><path d="M10 3 H14 V7" stroke="#000" stroke-width="1.4" fill="none"/><text x="8" y="16" font-size="5" font-weight="bold" fill="#1E2A78" font-family="Liberation Sans">7.7</text></svg>
<div style="left:692px;top:80px;width:1px;height:22px;background:#ACA899"></div>
<div style="left:693px;top:80px;width:1px;height:22px;background:#fff"></div>
<div style="left:793px;top:77px;width:1px;height:29px;background:#ACA899"></div>
<div style="left:0px;top:105px;width:794px;height:1px;background:#ACA899"></div>
<div style="left:0px;top:106px;width:1280px;height:1px;background:#fff"></div>
<svg style="left:10px;top:113px" width="16" height="16" viewBox="0 0 16 16"><rect x="0" y="1" width="13" height="12" fill="#000" rx="1"/><rect x="1" y="2" width="11" height="3" fill="#10106A"/><rect x="1" y="6" width="11" height="3" fill="#fff"/><rect x="3" y="7" width="1" height="1" fill="#000"/><rect x="6" y="7" width="1" height="1" fill="#000"/><rect x="9" y="7" width="1" height="1" fill="#000"/><rect x="1" y="10" width="11" height="3" fill="#fff"/><rect x="3" y="11" width="1" height="1" fill="#000"/><rect x="6" y="11" width="1" height="1" fill="#000"/><rect x="9" y="11" width="1" height="1" fill="#000"/><rect x="2" y="3" width="1" height="1" fill="#fff"/><rect x="5" y="3" width="1" height="1" fill="#fff"/><rect x="8" y="3" width="1" height="1" fill="#fff"/><rect x="11" y="3" width="1" height="1" fill="#fff"/><path d="M0 0 L3 3 M3 0 L0 3 M1.5 0 V4 M0 1.5 H4" stroke="#E8F040" stroke-width="1"/></svg>
<svg style="left:32px;top:113px" width="16" height="16" viewBox="0 0 16 16"><rect x="0" y="1" width="13" height="12" fill="#000" rx="1"/><rect x="1" y="2" width="11" height="3" fill="#10106A"/><rect x="1" y="6" width="11" height="3" fill="#fff"/><rect x="3" y="7" width="1" height="1" fill="#000"/><rect x="6" y="7" width="1" height="1" fill="#000"/><rect x="9" y="7" width="1" height="1" fill="#000"/><rect x="1" y="10" width="11" height="3" fill="#fff"/><rect x="3" y="11" width="1" height="1" fill="#000"/><rect x="6" y="11" width="1" height="1" fill="#000"/><rect x="9" y="11" width="1" height="1" fill="#000"/><rect x="2" y="3" width="1" height="1" fill="#fff"/><rect x="5" y="3" width="1" height="1" fill="#fff"/><rect x="8" y="3" width="1" height="1" fill="#fff"/><rect x="11" y="3" width="1" height="1" fill="#fff"/><path d="M13.5 11 V16 M11 13.5 H16" stroke="#000" stroke-width="1.2"/></svg>
<svg style="left:55px;top:113px" width="16" height="16" viewBox="0 0 16 16"><rect x="0" y="1" width="13" height="12" fill="#000" rx="1"/><rect x="1" y="2" width="11" height="3" fill="#10106A"/><rect x="1" y="6" width="11" height="3" fill="#fff"/><rect x="3" y="7" width="1" height="1" fill="#000"/><rect x="6" y="7" width="1" height="1" fill="#000"/><rect x="9" y="7" width="1" height="1" fill="#000"/><rect x="1" y="10" width="11" height="3" fill="#fff"/><rect x="3" y="11" width="1" height="1" fill="#000"/><rect x="6" y="11" width="1" height="1" fill="#000"/><rect x="9" y="11" width="1" height="1" fill="#000"/><rect x="2" y="3" width="1" height="1" fill="#fff"/><rect x="5" y="3" width="1" height="1" fill="#fff"/><rect x="8" y="3" width="1" height="1" fill="#fff"/><rect x="11" y="3" width="1" height="1" fill="#fff"/><path d="M8 7 L15 15 M15 7 L8 15" stroke="#C01010" stroke-width="1.6"/><path d="M8 7 L15 15" stroke="#000" stroke-width="0.6"/></svg>
<svg style="left:78px;top:113px" width="16" height="16" viewBox="0 0 16 16"><rect x="0" y="1" width="13" height="12" fill="#A8A59A" rx="1"/><rect x="1" y="2" width="11" height="3" fill="#A8A59A"/><rect x="1" y="6" width="11" height="3" fill="#fff"/><rect x="3" y="7" width="1" height="1" fill="#A8A59A"/><rect x="6" y="7" width="1" height="1" fill="#A8A59A"/><rect x="9" y="7" width="1" height="1" fill="#A8A59A"/><rect x="1" y="10" width="11" height="3" fill="#fff"/><rect x="3" y="11" width="1" height="1" fill="#A8A59A"/><rect x="6" y="11" width="1" height="1" fill="#A8A59A"/><rect x="9" y="11" width="1" height="1" fill="#A8A59A"/><rect x="2" y="3" width="1" height="1" fill="#E8E6DE"/><rect x="5" y="3" width="1" height="1" fill="#E8E6DE"/><rect x="8" y="3" width="1" height="1" fill="#E8E6DE"/><rect x="11" y="3" width="1" height="1" fill="#E8E6DE"/><rect x="8" y="8" width="8" height="8" fill="#A8A59A"/><rect x="10" y="9" width="4" height="2" fill="#C8C6BC"/><rect x="13" y="13" width="1" height="1" fill="#fff"/></svg>
<svg style="left:101px;top:113px" width="16" height="16" viewBox="0 0 16 16"><path d="M2.5 0.5 H10 L13.5 4 V14.5 H2.5 Z" fill="#F8F4C0" stroke="#808040"/><path d="M3 15 H14 M13.5 4 V15" stroke="#000" stroke-width="1.2"/><path d="M0 2 H5 Q9.5 2 9.5 6.5 Q9.5 11 5 11 H0 V10 H1.5 V3 H0 Z" fill="#10108A"/><path d="M3.5 3.5 V9.5 H5 Q7.3 9.5 7.3 6.5 Q7.3 3.5 5 3.5 Z" fill="#F8F4C0"/><path d="M5 7 H8 V7.5 H7 V10 L10.5 7.5 H13 V8 H12 L9.5 10 L13 13.5 H14 V14.5 H10.5 L8 12 V13.8 H9 V14.5 H5 V13.8 H6 V7.8 H5 Z" fill="#B01010"/></svg>
<svg style="left:124px;top:113px" width="16" height="16" viewBox="0 0 16 16"><path d="M0 2 H5 Q9.5 2 9.5 6.5 Q9.5 11 5 11 H0 V10 H1.5 V3 H0 Z" fill="#10108A"/><path d="M3.5 3.5 V9.5 H5 Q7.3 9.5 7.3 6.5 Q7.3 3.5 5 3.5 Z" fill="#ECE9D8"/><path d="M5 7 H8 V7.5 H7 V10 L10.5 7.5 H13 V8 H12 L9.5 10 L13 13.5 H14 V14.5 H10.5 L8 12 V13.8 H9 V14.5 H5 V13.8 H6 V7.8 H5 Z" fill="#B01010"/></svg>
<svg style="left:147px;top:113px" width="16" height="16" viewBox="0 0 16 16"><rect x="0.5" y="2.5" width="10" height="11" fill="#F8F4B0" stroke="#000"/><path d="M1 14 H11 M11 3 V14" stroke="#000" stroke-width="1.2"/><rect x="5" y="4" width="3" height="2" fill="#10108A"/><rect x="2" y="7" width="3" height="2" fill="#C01010"/><rect x="5" y="7" width="3" height="2" fill="#10108A"/><rect x="2" y="10" width="3" height="2" fill="#E02020"/><path d="M11 7.5 H16" stroke="#A01010" stroke-width="1.3"/><path d="M10 7.5 L13 5 V10 Z" fill="#A01010"/><path d="M12.5 0 V16" stroke="#A8A59A"/></svg>
<svg style="left:170px;top:113px" width="16" height="16" viewBox="0 0 16 16"><path d="M6.5 2.5 H15.5 M6.5 13.5 H15.5" stroke="#000" stroke-dasharray="1.2 0.8"/><rect x="6.5" y="4.5" width="9" height="7" fill="#fff" stroke="#000"/><rect x="8" y="6" width="3" height="2" fill="#10108A"/><rect x="11" y="8" width="3" height="2" fill="#C01010"/><path d="M0 6.5 H7" stroke="#A01010" stroke-width="1.3"/><path d="M8 6.5 L5 4 V9 Z" fill="#A01010"/><path d="M4.5 0 V16" stroke="#A8A59A"/></svg>
<svg style="left:194px;top:113px" width="16" height="16" viewBox="0 0 16 16"><path d="M8 1 L14 8 H10.5 V15 H5.5 V8 H2 Z" fill="#000"/></svg>
<svg style="left:217px;top:113px" width="16" height="16" viewBox="0 0 16 16"><path d="M8 15 L14 8 H10.5 V1 H5.5 V8 H2 Z" fill="#ACA899"/></svg>
<svg style="left:241px;top:113px" width="16" height="16" viewBox="0 0 16 16"><text x="0" y="7" font-size="7.5" font-weight="bold" fill="#1E2A9A" font-family="Liberation Sans">A</text><text x="0" y="15" font-size="7.5" font-weight="bold" fill="#A01818" font-family="Liberation Sans">Z</text><path d="M12 1 V13 M9.5 1 H14.5" stroke="#000" stroke-width="1.2"/><path d="M9.5 11 L12 15 L14.5 11 Z" fill="#000"/></svg>
<svg style="left:264px;top:113px" width="16" height="16" viewBox="0 0 16 16"><text x="0" y="7" font-size="7.5" font-weight="bold" fill="#A01818" font-family="Liberation Sans">Z</text><text x="0" y="15" font-size="7.5" font-weight="bold" fill="#1E2A9A" font-family="Liberation Sans">A</text><path d="M12 1 V13 M9.5 1 H14.5" stroke="#000" stroke-width="1.2"/><path d="M9.5 11 L12 15 L14.5 11 Z" fill="#000"/></svg>
<svg style="left:286px;top:113px" width="16" height="16" viewBox="0 0 16 16"><path d="M1.5 1.5 H10 L13.5 5 V15.5 H1.5 Z" fill="#fff" stroke="#000"/><path d="M10 1.5 V5 H13.5" fill="#F4EEA0" stroke="#000"/><text x="3" y="13" font-size="10" font-weight="bold" fill="#1E2A9A" font-family="Liberation Sans">?</text></svg>
<svg style="left:308px;top:113px" width="16" height="16" viewBox="0 0 16 16"><path d="M1 1 V13 L4 10 L6.5 15 L8.5 14 L6 9 H10 Z" fill="#fff" stroke="#000"/><text x="9" y="8" font-size="8" font-weight="bold" fill="#1E2A9A" font-family="Liberation Sans">?</text></svg>
<div style="left:0px;top:135px;width:1280px;height:1px;background:#ACA899"></div>
<div style="left:1px;top:136px;width:1278px;height:1px;background:#716F64"></div>
<div style="left:0px;top:135px;width:1px;height:812px;background:#ACA899"></div>
<div style="left:1px;top:136px;width:1px;height:810px;background:#716F64"></div>
<div style="left:1279px;top:135px;width:1px;height:812px;background:#fff"></div>
<div style="left:0px;top:947px;width:1280px;height:1px;background:#fff"></div>
<div style="left:7px;top:148px;width:147px;height:33px;border:1px solid #D0D0BF;border-radius:0"></div>
<div style="left:7px;top:148px;width:146px;height:32px;border-top:1px solid #ACA899;border-left:1px solid #ACA899;border-right:1px solid #fff;border-bottom:1px solid #fff"></div>
<div style="left:13px;top:142px;width:72px;height:12px;background:#ECE9D8"></div>
<div class="t" style="left:16px;top:141px;font-size:12px;letter-spacing:-0.25px">Тип выписки</div>
<div class="t" style="left:12px;top:160px;font-weight:bold;letter-spacing:0.48px">рублевая (по счету 51)</div>
<div class="btn" style="left:7px;top:189px;width:15px;height:16px;line-height:16px;font-size:10px">...</div>
<div class="t" style="left:26px;top:190px;">№ 40702810268090030029 в банке Удмуртское отделение №8618</div>
<div class="t" style="left:344px;top:157px;font-size:14px;font-weight:bold;color:#800000;line-height:16px">Выписка №</div>
<div class="sunk" style="left:430px;top:155px;width:81px;height:21px"></div>
<div class="t" style="left:433px;top:159px;">000068</div>
<div class="t" style="left:520px;top:157px;font-size:14px;font-weight:bold;color:#800000;line-height:16px">от</div>
<div class="sunk" style="left:541px;top:155px;width:82px;height:21px"></div>
<div class="t" style="left:545px;top:159px;">30.12.10</div>
<div style="left:606px;top:156px;width:17px;height:20px;background:#000"></div>
<div style="left:607px;top:157px;width:15px;height:18px;background:#ECE9D8;border-top:1px solid #fff;border-left:1px solid #fff;border-right:1px solid #ACA899;border-bottom:1px solid #ACA899"></div>
<svg style="left:609px;top:161px" width="11" height="10" viewBox="0 0 11 10"><rect x="0.5" y="0.5" width="10" height="9" fill="#fff" stroke="#000"/><rect x="0" y="0" width="11" height="2.5" fill="#000"/><path d="M2 4.5 H9 M2 6.5 H9 M2 8.5 H9 M3.5 3 V9 M5.5 3 V9 M7.5 3 V9" stroke="#000" stroke-width="0.8"/></svg>
<div style="left:7px;top:210px;width:1264px;height:630px;background:#fff;border:1px solid #000"></div>
<div style="left:8px;top:211px;width:1262px;height:1px;background:#ACA899"></div>
<div style="left:8px;top:211px;width:1px;height:628px;background:#ACA899"></div>
<div style="left:9px;top:212px;width:1242px;height:46px;background:#ECE9D8"></div>
<div style="left:9px;top:227px;width:1242px;height:1px;background:#000"></div>
<div style="left:9px;top:242px;width:1242px;height:1px;background:#000"></div>
<div style="left:9px;top:256px;width:1242px;height:1px;background:#000"></div>
<div style="left:9px;top:258px;width:1242px;height:1px;background:#000"></div>
<div style="left:9px;top:257px;width:1242px;height:1px;background:#fff"></div>
<div style="left:9px;top:212px;width:38px;height:1px;background:#fff"></div>
<div style="left:9px;top:212px;width:1px;height:44px;background:#fff"></div>
<div style="left:46px;top:212px;width:1px;height:44px;background:#fff"></div>
<div style="left:9px;top:255px;width:38px;height:1px;background:#fff"></div>
<div style="left:50px;top:212px;width:322px;height:1px;background:#fff"></div>
<div style="left:50px;top:212px;width:1px;height:15px;background:#fff"></div>
<div style="left:371px;top:212px;width:1px;height:15px;background:#fff"></div>
<div style="left:50px;top:226px;width:322px;height:1px;background:#fff"></div>
<div style="left:50px;top:228px;width:322px;height:1px;background:#fff"></div>
<div style="left:50px;top:228px;width:1px;height:14px;background:#fff"></div>
<div style="left:371px;top:228px;width:1px;height:14px;background:#fff"></div>
<div style="left:50px;top:241px;width:322px;height:1px;background:#fff"></div>
<div style="left:50px;top:243px;width:322px;height:1px;background:#fff"></div>
<div style="left:50px;top:243px;width:1px;height:13px;background:#fff"></div>
<div style="left:371px;top:243px;width:1px;height:13px;background:#fff"></div>
<div style="left:50px;top:255px;width:322px;height:1px;background:#fff"></div>
<div style="left:375px;top:212px;width:124px;height:1px;background:#fff"></div>
<div style="left:375px;top:212px;width:1px;height:15px;background:#fff"></div>
<div style="left:498px;top:212px;width:1px;height:15px;background:#fff"></div>
<div style="left:375px;top:226px;width:124px;height:1px;background:#fff"></div>
<div style="left:375px;top:228px;width:124px;height:1px;background:#fff"></div>
<div style="left:375px;top:228px;width:1px;height:14px;background:#fff"></div>
<div style="left:498px;top:228px;width:1px;height:14px;background:#fff"></div>
<div style="left:375px;top:241px;width:124px;height:1px;background:#fff"></div>
<div style="left:375px;top:243px;width:124px;height:1px;background:#fff"></div>
<div style="left:375px;top:243px;width:1px;height:13px;background:#fff"></div>
<div style="left:498px;top:243px;width:1px;height:13px;background:#fff"></div>
<div style="left:375px;top:255px;width:124px;height:1px;background:#fff"></div>
<div style="left:502px;top:212px;width:198px;height:1px;background:#fff"></div>
<div style="left:502px;top:212px;width:1px;height:15px;background:#fff"></div>
<div style="left:699px;top:212px;width:1px;height:15px;background:#fff"></div>
<div style="left:502px;top:226px;width:198px;height:1px;background:#fff"></div>
<div style="left:502px;top:228px;width:198px;height:1px;background:#fff"></div>
<div style="left:502px;top:228px;width:1px;height:14px;background:#fff"></div>
<div style="left:699px;top:228px;width:1px;height:14px;background:#fff"></div>
<div style="left:502px;top:241px;width:198px;height:1px;background:#fff"></div>
<div style="left:502px;top:243px;width:198px;height:1px;background:#fff"></div>
<div style="left:502px;top:243px;width:1px;height:13px;background:#fff"></div>
<div style="left:699px;top:243px;width:1px;height:13px;background:#fff"></div>
<div style="left:502px;top:255px;width:198px;height:1px;background:#fff"></div>
<div style="left:703px;top:212px;width:273px;height:1px;background:#fff"></div>
<div style="left:703px;top:212px;width:1px;height:15px;background:#fff"></div>
<div style="left:975px;top:212px;width:1px;height:15px;background:#fff"></div>
<div style="left:703px;top:226px;width:273px;height:1px;background:#fff"></div>
<div style="left:703px;top:228px;width:273px;height:1px;background:#fff"></div>
<div style="left:703px;top:228px;width:1px;height:14px;background:#fff"></div>
<div style="left:975px;top:228px;width:1px;height:14px;background:#fff"></div>
<div style="left:703px;top:241px;width:273px;height:1px;background:#fff"></div>
<div style="left:703px;top:243px;width:273px;height:1px;background:#fff"></div>
<div style="left:703px;top:243px;width:1px;height:13px;background:#fff"></div>
<div style="left:975px;top:243px;width:1px;height:13px;background:#fff"></div>
<div style="left:703px;top:255px;width:273px;height:1px;background:#fff"></div>
<div style="left:979px;top:212px;width:272px;height:1px;background:#fff"></div>
<div style="left:979px;top:212px;width:1px;height:15px;background:#fff"></div>
<div style="left:1250px;top:212px;width:1px;height:15px;background:#fff"></div>
<div style="left:979px;top:226px;width:272px;height:1px;background:#fff"></div>
<div style="left:979px;top:228px;width:272px;height:1px;background:#fff"></div>
<div style="left:979px;top:228px;width:1px;height:14px;background:#fff"></div>
<div style="left:1250px;top:228px;width:1px;height:14px;background:#fff"></div>
<div style="left:979px;top:241px;width:272px;height:1px;background:#fff"></div>
<div style="left:979px;top:243px;width:272px;height:1px;background:#fff"></div>
<div style="left:979px;top:243px;width:1px;height:13px;background:#fff"></div>
<div style="left:1250px;top:243px;width:1px;height:13px;background:#fff"></div>
<div style="left:979px;top:255px;width:272px;height:1px;background:#fff"></div>
<div style="left:9px;top:227px;width:38px;height:1px;background:#ECE9D8"></div>
<div style="left:9px;top:242px;width:38px;height:1px;background:#ECE9D8"></div>
<div style="left:10px;top:213px;width:36px;height:42px;background:#ECE9D8"></div>
<div style="left:838px;top:212px;width:1px;height:15px;background:#000"></div>
<div style="left:839px;top:213px;width:1px;height:13px;background:#fff"></div>
<div style="left:837px;top:213px;width:1px;height:13px;background:#fff"></div>
<div style="left:1221px;top:212px;width:1px;height:15px;background:#000"></div>
<div style="left:1222px;top:213px;width:1px;height:13px;background:#fff"></div>
<div style="left:1220px;top:213px;width:1px;height:13px;background:#fff"></div>
<div style="left:50px;top:273px;width:1201px;height:1px;background:#000"></div>
<div style="left:50px;top:288px;width:1201px;height:1px;background:#000"></div>
<div style="left:9px;top:303px;width:1242px;height:1px;background:#000"></div>
<div style="left:9px;top:348px;width:1242px;height:1px;background:#000"></div>
<div style="left:9px;top:393px;width:1242px;height:1px;background:#000"></div>
<div style="left:9px;top:438px;width:1242px;height:1px;background:#000"></div>
<div style="left:9px;top:483px;width:1242px;height:1px;background:#000"></div>
<div style="left:9px;top:528px;width:1242px;height:1px;background:#000"></div>
<div style="left:9px;top:573px;width:1242px;height:1px;background:#000"></div>
<div style="left:9px;top:618px;width:1242px;height:1px;background:#000"></div>
<div style="left:9px;top:663px;width:1242px;height:1px;background:#000"></div>
<div style="left:9px;top:708px;width:1242px;height:1px;background:#000"></div>
<div style="left:9px;top:753px;width:1242px;height:1px;background:#000"></div>
<div style="left:9px;top:798px;width:1242px;height:1px;background:#000"></div>
<div style="left:838px;top:259px;width:1px;height:14px;background:#000"></div>
<div style="left:1221px;top:259px;width:1px;height:14px;background:#000"></div>
<div style="left:47px;top:212px;width:1px;height:627px;background:#000"></div>
<div style="left:48px;top:212px;width:1px;height:627px;background:#ECE9D8"></div>
<div style="left:48px;top:258px;width:1px;height:581px;background:#fff"></div>
<div style="left:49px;top:212px;width:1px;height:627px;background:#000"></div>
<div style="left:372px;top:212px;width:1px;height:627px;background:#000"></div>
<div style="left:373px;top:212px;width:1px;height:627px;background:#ECE9D8"></div>
<div style="left:373px;top:258px;width:1px;height:581px;background:#fff"></div>
<div style="left:374px;top:212px;width:1px;height:627px;background:#000"></div>
<div style="left:499px;top:212px;width:1px;height:627px;background:#000"></div>
<div style="left:500px;top:212px;width:1px;height:627px;background:#ECE9D8"></div>
<div style="left:500px;top:258px;width:1px;height:581px;background:#fff"></div>
<div style="left:501px;top:212px;width:1px;height:627px;background:#000"></div>
<div style="left:700px;top:212px;width:1px;height:627px;background:#000"></div>
<div style="left:701px;top:212px;width:1px;height:627px;background:#ECE9D8"></div>
<div style="left:701px;top:258px;width:1px;height:581px;background:#fff"></div>
<div style="left:702px;top:212px;width:1px;height:627px;background:#000"></div>
<div style="left:976px;top:212px;width:1px;height:627px;background:#000"></div>
<div style="left:977px;top:212px;width:1px;height:627px;background:#ECE9D8"></div>
<div style="left:977px;top:258px;width:1px;height:581px;background:#fff"></div>
<div style="left:978px;top:212px;width:1px;height:627px;background:#000"></div>
<div class="t" style="left:12px;top:214px;font-weight:bold;letter-spacing:0.6px">N</div>
<div class="t" style="left:53px;top:214px;font-weight:bold;letter-spacing:0.6px">Назначение платежа</div>
<div class="t" style="left:53px;top:229px;font-weight:bold;letter-spacing:0.6px">Движ. денежных средств</div>
<div class="t" style="left:53px;top:244px;font-weight:bold;letter-spacing:0.6px">Корр. счет</div>
<div class="t" style="left:377px;top:214px;font-weight:bold;letter-spacing:0.6px">Вид субк.1</div>
<div class="t" style="left:377px;top:229px;font-weight:bold;letter-spacing:0.6px">Вид субк.2</div>
<div class="t" style="left:377px;top:244px;font-weight:bold;letter-spacing:0.6px">Вид субк.3</div>
<div class="t" style="left:504px;top:214px;font-weight:bold;letter-spacing:0.6px">Субконто1</div>
<div class="t" style="left:504px;top:229px;font-weight:bold;letter-spacing:0.6px">Субконто2</div>
<div class="t" style="left:504px;top:244px;font-weight:bold;letter-spacing:0.6px">Субконто3</div>
<div class="t" style="left:706px;top:214px;font-weight:bold;letter-spacing:0.6px">Приход</div>
<div class="t" style="left:842px;top:214px;font-weight:bold;letter-spacing:0.6px">Расход</div>
<div class="t" style="left:706px;top:229px;font-weight:bold;letter-spacing:0.6px">Основное средство</div>
<div class="t" style="left:706px;top:244px;font-weight:bold;letter-spacing:0.6px">Для целей НУ</div>
<div class="t" style="left:982px;top:214px;font-weight:bold;letter-spacing:0.6px">Плат.&nbsp; документ</div>
<div class="t" style="left:982px;top:229px;font-weight:bold;letter-spacing:0.6px">Дата док.</div>
<div class="t" style="left:982px;top:244px;font-weight:bold;letter-spacing:0.6px">Номер док.</div>
<div style="left:502px;top:289px;width:198px;height:14px;background:#316AC5;outline:1px dotted #000;outline-offset:-1px"></div>
<div class="t" style="left:40px;top:260px;">4</div>
<div class="t" style="left:53px;top:260px;">по тов.накладной</div>
<div class="t" style="left:53px;top:275px;">Оплата поставщику</div>
<div class="t" style="left:53px;top:290px;">60.2</div>
<div class="t" style="left:377px;top:260px;">Контрагенты</div>
<div class="t" style="left:377px;top:275px;">Договоры</div>
<div class="t" style="left:377px;top:290px;">Виды расчетов с постав</div>
<div class="t" style="left:504px;top:260px;">роса</div>
<div class="t" style="left:504px;top:275px;">Основной договор</div>
<div class="t" style="left:706px;top:290px;">Оплата</div>
<div class="t" style="left:982px;top:275px;">30.12.10</div>
<div class="t" style="left:982px;top:290px;">79</div>
<div class="t" style="left:1225px;top:260px;">0</div>
<div class="t" style="left:504px;top:290px;width:196px;height:12px;overflow:hidden;color:#fff">Расходы на приобретение товаров и материалов</div>
<div class="t" style="left:880px;top:260px;width:94px;text-align:right">17,380.00</div>
<div style="left:497px;top:259px;width:2px;height:14px;background:#fff"></div>
<div style="left:497px;top:274px;width:2px;height:14px;background:#fff"></div>
<div style="left:497px;top:289px;width:2px;height:14px;background:#fff"></div>
<div style="left:499px;top:259px;width:3px;height:44px;background:#000"></div>
<div style="left:500px;top:259px;width:1px;height:44px;background:#fff"></div>
<div style="left:9px;top:838px;width:1242px;height:1px;background:#F4F3EE"></div>
<div style="left:1251px;top:212px;width:17px;height:627px;background:linear-gradient(90deg,#F3F1EC,#FEFEFB)"></div>
<div style="left:1252px;top:213px;width:15px;height:16px;border:1px solid #fff;border-radius:2px;background:linear-gradient(135deg,#C6D5FC,#B2C8F8 60%,#A9C0F4)"></div>
<div style="left:1252px;top:820px;width:15px;height:16px;border:1px solid #fff;border-radius:2px;background:linear-gradient(135deg,#C6D5FC,#B2C8F8 60%,#A9C0F4)"></div>
<svg style="left:1255px;top:218px" width="9" height="7" viewBox="0 0 9 7"><path d="M1 5 L4.5 1.5 L8 5" stroke="#4D6185" stroke-width="2" fill="none"/></svg>
<svg style="left:1255px;top:826px" width="9" height="7" viewBox="0 0 9 7"><path d="M1 1.5 L4.5 5 L8 1.5" stroke="#4D6185" stroke-width="2" fill="none"/></svg>
<div style="left:1252px;top:803px;width:15px;height:16px;border:1px solid #fff;border-radius:2px;background:linear-gradient(90deg,#C8D6FC,#BACDFA)"></div>
<svg style="left:1256px;top:807px" width="7" height="8" viewBox="0 0 7 8"><path d="M0 0.5 H6 M0 2.5 H6 M0 4.5 H6 M0 6.5 H6" stroke="#8EA5E0" stroke-width="1"/></svg>
<div class="btn" style="left:7px;top:849px;width:166px;height:22px;line-height:20px;">Показать остатки</div>
<div class="btn" style="left:7px;top:873px;width:166px;height:22px;line-height:20px;">Поступление по документам</div>
<div class="btn" style="left:179px;top:873px;width:166px;height:22px;line-height:20px;">Подбор по плат. документам</div>
<div class="t" style="left:183px;top:845px;font-weight:bold;letter-spacing:0.7px">Остаток на начало дня:</div>
<div class="t" style="left:188px;top:859px;font-weight:bold;letter-spacing:0.7px">Остаток на конец дня:</div>
<div class="t" style="left:380px;top:845px;width:53px;text-align:right;font-weight:bold;letter-spacing:0.55px">0-00</div>
<div class="t" style="left:380px;top:859px;width:53px;text-align:right;font-weight:bold;letter-spacing:0.55px">0-00</div>
<div class="t" style="left:447px;top:845px;font-weight:bold;letter-spacing:0.3px">Поступило:</div>
<div class="t" style="left:460px;top:859px;font-weight:bold;letter-spacing:0.3px">Списано:</div>
<div class="t" style="left:520px;top:845px;width:100px;text-align:right;font-weight:bold;letter-spacing:0.7px">0-00</div>
<div class="t" style="left:520px;top:859px;width:100px;text-align:right;font-weight:bold;letter-spacing:0.7px">32,436-46</div>
<div class="t" style="left:8px;top:902px;letter-spacing:0.2px">Комментарий:</div>
<div class="sunk" style="left:91px;top:898px;width:531px;height:20px"></div>
<div class="btn" style="left:7px;top:922px;width:82px;height:22px;line-height:20px;">Запи<u>с</u>ать</div>
<div class="btn" style="left:91px;top:922px;width:82px;height:22px;line-height:20px;">OK</div>
<div class="btn" style="left:175px;top:922px;width:82px;height:22px;line-height:20px;"><u>З</u>акрыть</div>
<div class="btn" style="left:259px;top:922px;width:82px;height:22px;line-height:20px;"><u>Д</u>ействия...</div>
<div style="left:0px;top:948px;width:1280px;height:1px;background:#F4F3EE"></div>
<div style="left:0px;top:949px;width:1280px;height:1px;background:#fff"></div>
<div class="btn" style="left:2px;top:952px;width:210px;height:20px"></div>
<div class="t" style="left:22px;top:956px;font-size:12px;line-height:14px;letter-spacing:0.7px">Поступление (01.01.10-31.1...</div>
<svg style="left:5px;top:954px" width="16" height="16" viewBox="0 0 16 16"><path d="M1 4 L4 2 V15 H1 Z" fill="#A8A820" stroke="#000" stroke-width="0.8"/><path d="M4 4 L7 2 V15 H4 Z" fill="#E8E840" stroke="#000" stroke-width="0.8"/><path d="M7 5 L10 3 V15 H7 Z" fill="#1E2A9A" stroke="#000" stroke-width="0.8"/><path d="M10 4 L14 2 V15 H10 Z" fill="#0A0AA0" stroke="#000" stroke-width="0.8"/></svg>
<div class="btn" style="left:214px;top:952px;width:208px;height:20px"></div>
<div class="t" style="left:234px;top:956px;font-size:12px;line-height:14px;letter-spacing:0.85px">Книга учета доходов и расх...</div>
<svg style="left:217px;top:954px" width="16" height="16" viewBox="0 0 16 16"><path d="M1.5 1.5 H9 L12.5 5 V14.5 H1.5 Z" fill="#fff" stroke="#808040"/><path d="M1 15 H13.5 M13 5 V15.5" stroke="#000" stroke-width="1.3"/><path d="M3 4 H7.5 M3.5 4 L6 7 L3.5 10 M3 10 H7.5" stroke="#000" stroke-width="1.3" fill="none"/><path d="M9.5 11 H13 M11.2 9.2 V12.8" stroke="#108030" stroke-width="1.3"/></svg>
<div class="btn" style="left:425px;top:952px;width:208px;height:20px"></div>
<div class="t" style="left:445px;top:956px;font-size:12px;line-height:14px;letter-spacing:0.85px">Книга учета доходов и расх...</div>
<svg style="left:428px;top:954px" width="16" height="16" viewBox="0 0 16 16"><path d="M3.5 0.5 H11 L14.5 4 V15.5 H3.5 Z" fill="#F4F4F8" stroke="#909090"/><path d="M3 15.5 H15 M14.5 4 V16" stroke="#000" stroke-width="1.3"/><path d="M8 7 H12 M8 9 H12" stroke="#B0B0B0"/><path d="M0 12 L5 1.5 L10 12 H7.5 L5 6 L2.5 12 Z" fill="#E01010"/><path d="M3 9 H7" stroke="#E01010" stroke-width="1.5"/></svg>
<div class="btn" style="left:637px;top:952px;width:210px;height:20px"></div>
<div class="t" style="left:657px;top:956px;font-size:12px;line-height:14px;letter-spacing:0.85px">Банковские выписки (01.01....</div>
<svg style="left:640px;top:954px" width="16" height="16" viewBox="0 0 16 16"><path d="M1 4 L4 2 V15 H1 Z" fill="#A8A820" stroke="#000" stroke-width="0.8"/><path d="M4 4 L7 2 V15 H4 Z" fill="#E8E840" stroke="#000" stroke-width="0.8"/><path d="M7 5 L10 3 V15 H7 Z" fill="#1E2A9A" stroke="#000" stroke-width="0.8"/><path d="M10 4 L14 2 V15 H10 Z" fill="#0A0AA0" stroke="#000" stroke-width="0.8"/></svg>
<div style="left:849px;top:952px;width:209px;height:20px;background:#F5F4EF;border-top:1px solid #716F64;border-left:1px solid #716F64;border-right:1px solid #fff;border-bottom:1px solid #fff;box-shadow:inset 1px 1px 0 #ACA899"></div>
<div class="t" style="left:869px;top:956px;font-weight:bold;font-size:12px;line-height:14px;letter-spacing:0.65px">Банковская выписка - 000...</div>
<svg style="left:852px;top:954px" width="16" height="16" viewBox="0 0 16 16"><path d="M2.5 1.5 H10 L13.5 5 V14.5 H2.5 Z" fill="#fff" stroke="#000"/><path d="M2 14.5 H14.5 M14 5 V15" stroke="#000" stroke-width="1.5"/><path d="M10 1.5 V5 H13.5" fill="#D0D0D0" stroke="#909090"/><path d="M4 5.5 H9 M4 7.5 H12 M4 9.5 H12 M4 11.5 H12" stroke="#000"/></svg>
<div style="left:0px;top:975px;width:1280px;height:1px;background:#D8D5C8"></div>
<div class="t" style="left:2px;top:980px;">Для получения подсказки нажмите F1</div>
<div style="left:765px;top:977px;width:25px;height:17px;border-top:1px solid #ACA899;border-left:1px solid #ACA899;border-right:1px solid #fff;border-bottom:1px solid #fff"></div>
<div style="left:793px;top:977px;width:26px;height:17px;border-top:1px solid #ACA899;border-left:1px solid #ACA899;border-right:1px solid #fff;border-bottom:1px solid #fff"></div>
<div class="t" style="left:795px;top:980px;">NUM</div>
<div style="left:823px;top:977px;width:149px;height:17px;border-top:1px solid #ACA899;border-left:1px solid #ACA899;border-right:1px solid #fff;border-bottom:1px solid #fff"></div>
<div class="t" style="left:825px;top:980px;">ТА: 01.01.10&nbsp; 00:00:00</div>
<div style="left:975px;top:977px;width:151px;height:17px;border-top:1px solid #ACA899;border-left:1px solid #ACA899;border-right:1px solid #fff;border-bottom:1px solid #fff"></div>
<div class="t" style="left:977px;top:980px;">БИ: 1 квартал 2011 г.</div>
<div style="left:1129px;top:977px;width:151px;height:17px;border-top:1px solid #ACA899;border-left:1px solid #ACA899;border-right:1px solid #fff;border-bottom:1px solid #fff"></div>
<div class="t" style="left:1131px;top:980px;">ТП:</div>
<div style="left:0px;top:994px;width:1280px;height:30px;background:linear-gradient(#3168D5 0px,#4993E6 1px,#2157D7 3px,#2663E0 6px,#245DDB 20px,#1941A5 29px)"></div>
<div style="left:0px;top:994px;width:95px;height:30px;border-radius:0 11px 11px 0;background:linear-gradient(#2F7F2F 0px,#64B864 2px,#4EA84E 5px,#3C9B3C 10px,#37963A 22px,#2F842F 30px);box-shadow:inset -3px 0 4px rgba(0,40,0,0.35), inset 1px 0 0 #2A6A2A"></div>
<svg style="left:10px;top:999px" width="20" height="20" viewBox="0 0 20 20"><path d="M3 2 Q6 0 10 2 L9 9 Q6 7 2 9 Z" fill="#F06020"/><path d="M11 3 Q14 5 19 3 L18 10 Q14 12 10 10 Z" fill="#80C020"/><path d="M2 10 Q5 8 9 10 L8 17 Q5 15 1 17 Z" fill="#3080F0"/><path d="M10 11 Q14 13 18 11 L17 18 Q14 20 9 18 Z" fill="#F8C820"/></svg>
<div class="t" style="left:34px;top:998px;font-size:18px;line-height:22px;font-weight:bold;font-style:italic;color:#fff;letter-spacing:-0.5px;text-shadow:1px 1px 1px #204020">пуск</div>
<svg style="left:108px;top:1001px" width="16" height="16" viewBox="0 0 16 16"><rect x="0.5" y="0.5" width="15" height="15" fill="#fff" stroke="#1E2A9A"/><rect x="1" y="1" width="14" height="7" fill="#2040C0"/><rect x="4" y="1" width="7" height="5" fill="#E0E0F0"/><rect x="2" y="10" width="12" height="1.5" fill="#D02020"/><rect x="2" y="12.5" width="12" height="1.5" fill="#D02020"/></svg>
<svg style="left:131px;top:1001px" width="16" height="16" viewBox="0 0 16 16"><path d="M3 1 H12 V6 H3Z" fill="#fff" stroke="#806020"/><rect x="0.5" y="5.5" width="15" height="9" rx="2" fill="#F0D080" stroke="#806020"/><rect x="3" y="10" width="10" height="3" fill="#fff"/></svg>
<svg style="left:153px;top:1001px" width="16" height="16" viewBox="0 0 16 16"><path d="M1 11 L8 3 L13 1 L15 4 L9 7 L12 8 L5 14 L2 15 Z" fill="#F8F8F0" stroke="#404040" stroke-width="0.7"/><path d="M3 11 L8 5 L12 3 L9 6 L11 7 L5 12 Z" fill="#F0A020"/></svg>
<div class="t" style="left:181px;top:996px;color:#C8D8FF;font-size:11px;font-weight:bold">»</div>
<div style="left:198px;top:998px;width:130px;height:23px;border-radius:3px;background:linear-gradient(#4C8CF6 0px,#3D82F3 2px,#3A7DEF 18px,#3274E6 22px);border:1px solid #2A5BC8"></div>
<svg style="left:207px;top:1002px" width="16" height="16" viewBox="0 0 16 16"><path d="M1 11 L8 3 L13 1 L15 4 L9 7 L12 8 L5 14 L2 15 Z" fill="#F8F8F0" stroke="#404040" stroke-width="0.7"/><path d="M3 11 L8 5 L12 3 L9 6 L11 7 L5 12 Z" fill="#F0A020"/></svg>
<div class="t" style="left:227px;top:1003px;color:#fff;font-size:11px">10. Китай - Мо...</div>
<div style="left:330px;top:998px;width:130px;height:23px;border-radius:3px;background:linear-gradient(#4C8CF6 0px,#3D82F3 2px,#3A7DEF 18px,#3274E6 22px);border:1px solid #2A5BC8"></div>
<svg style="left:339px;top:1002px" width="16" height="16" viewBox="0 0 16 16"><path d="M1 3 H6 L7 4.5 H15 V14 H1 Z" fill="#E8C850" stroke="#8A6A10"/><path d="M1 6 H15 V14 H1Z" fill="#F8E080" stroke="#8A6A10"/></svg>
<div class="t" style="left:359px;top:1003px;color:#fff;font-size:11px">Продажа газо...</div>
<div style="left:462px;top:998px;width:130px;height:23px;border-radius:3px;background:linear-gradient(#4C8CF6 0px,#3D82F3 2px,#3A7DEF 18px,#3274E6 22px);border:1px solid #2A5BC8"></div>
<svg style="left:471px;top:1002px" width="16" height="16" viewBox="0 0 16 16"><path d="M1 3 H6 L7 4.5 H15 V14 H1 Z" fill="#E8C850" stroke="#8A6A10"/><path d="M1 6 H15 V14 H1Z" fill="#F8E080" stroke="#8A6A10"/></svg>
<div class="t" style="left:491px;top:1003px;color:#fff;font-size:11px">Аукционная му...</div>
<div style="left:595px;top:998px;width:129px;height:23px;border-radius:3px;background:linear-gradient(#4C8CF6 0px,#3D82F3 2px,#3A7DEF 18px,#3274E6 22px);border:1px solid #2A5BC8"></div>
<svg style="left:604px;top:1002px" width="16" height="16" viewBox="0 0 16 16"><path d="M2.5 1.5 H10 L13.5 5 V15.5 H2.5 Z" fill="#fff" stroke="#6080B0"/><circle cx="8" cy="8" r="3" fill="#C0E0F0" stroke="#204080"/><path d="M5.5 10.5 L3 13.5" stroke="#C03030" stroke-width="1.6"/></svg>
<div class="t" style="left:624px;top:1003px;color:#fff;font-size:11px">Результаты по...</div>
<div style="left:726px;top:998px;width:133px;height:23px;border-radius:3px;background:linear-gradient(#1E4BB8,#1C4AB5);box-shadow:inset 1px 1px 2px #0F2A70;border:1px solid #2A5BC8"></div>
<svg style="left:735px;top:1002px" width="16" height="16" viewBox="0 0 16 16"><path d="M0 2 H9 L10 1 H16 V12 L12 13 H3 L1 14 Z" fill="#F4F000"/><path d="M1.5 7 L3.5 12 L7.5 4.5 Q10 3 15.5 3" stroke="#A02050" stroke-width="2.2" fill="none"/><path d="M6 9.5 Q11 9 16 4.5" stroke="#30309A" stroke-width="1.6" fill="none"/><rect x="8" y="12" width="2" height="4" fill="#101040"/><rect x="12" y="12" width="4" height="1.6" fill="#101040"/><rect x="13.5" y="12" width="1.6" height="4" fill="#101040"/></svg>
<div class="t" style="left:755px;top:1003px;color:#fff;font-size:11px">1С:Предприят...</div>
<div style="left:860px;top:998px;width:131px;height:23px;border-radius:3px;background:linear-gradient(#4C8CF6 0px,#3D82F3 2px,#3A7DEF 18px,#3274E6 22px);border:1px solid #2A5BC8"></div>
<svg style="left:869px;top:1002px" width="16" height="16" viewBox="0 0 16 16"><path d="M3.5 0.5 H11 L14.5 4 V15.5 H3.5 Z" fill="#fff" stroke="#5070A0"/><rect x="0.5" y="4.5" width="9" height="8" fill="#E8ECF8" stroke="#3050A0"/><text x="1.2" y="11.5" font-size="7" font-weight="bold" fill="#1E3EA0" font-family="Liberation Sans">W</text></svg>
<div class="t" style="left:889px;top:1003px;color:#fff;font-size:11px">Аукционная до...</div>
<div style="left:993px;top:998px;width:131px;height:23px;border-radius:3px;background:linear-gradient(#4C8CF6 0px,#3D82F3 2px,#3A7DEF 18px,#3274E6 22px);border:1px solid #2A5BC8"></div>
<svg style="left:1002px;top:1002px" width="16" height="16" viewBox="0 0 16 16"><ellipse cx="8" cy="8" rx="6.5" ry="7" fill="none" stroke="#D01010" stroke-width="3.5"/></svg>
<div class="t" style="left:1022px;top:1003px;color:#fff;font-size:11px">Не учитывают...</div>
<div style="left:1169px;top:994px;width:111px;height:30px;background:linear-gradient(#0E8AEB 0px,#1AA2F2 2px,#0F98EE 6px,#0D8EE9 24px,#0B6ACB 30px);border-left:1px solid #1042AF"></div>
<div style="left:1160px;top:1000px;width:18px;height:18px;border-radius:50%;background:radial-gradient(circle at 40% 35%,#8CC4FF,#2E7BE0);border:1px solid #E8F0FF"></div>
<svg style="left:1164px;top:1004px" width="9" height="10" viewBox="0 0 9 10"><path d="M6 1 L2 5 L6 9" stroke="#fff" stroke-width="2" fill="none"/></svg>
<svg style="left:1180px;top:1001px" width="16" height="16" viewBox="0 0 16 16"><rect x="0.5" y="0.5" width="15" height="15" fill="#fff" stroke="#102080" stroke-width="1.5"/><path d="M4 12 Q10 12 12 4" stroke="#1E2A9A" stroke-width="2" fill="none"/></svg>
<svg style="left:1198px;top:1001px" width="16" height="16" viewBox="0 0 16 16"><path d="M0.5 1.5 H4 L7 8 L12 1.5 H15.5 L8 12 Z" fill="#F01010" stroke="#fff" stroke-width="0.8"/><path d="M9 9 L14 14" stroke="#000" stroke-width="2.2"/><path d="M11 15 H15 V11 Z" fill="#000"/></svg>
<svg style="left:1216px;top:1003px" width="15" height="16" viewBox="0 0 15 16"><rect x="0" y="1" width="14" height="3.5" fill="#F0F0F8"/><rect x="0" y="4.5" width="14" height="3.5" fill="#2030C0"/><rect x="0" y="8" width="14" height="3.5" fill="#D01818"/></svg>
<div class="t" style="left:1240px;top:1003px;color:#fff;font-size:11px">14:49</div>
</body></html>
